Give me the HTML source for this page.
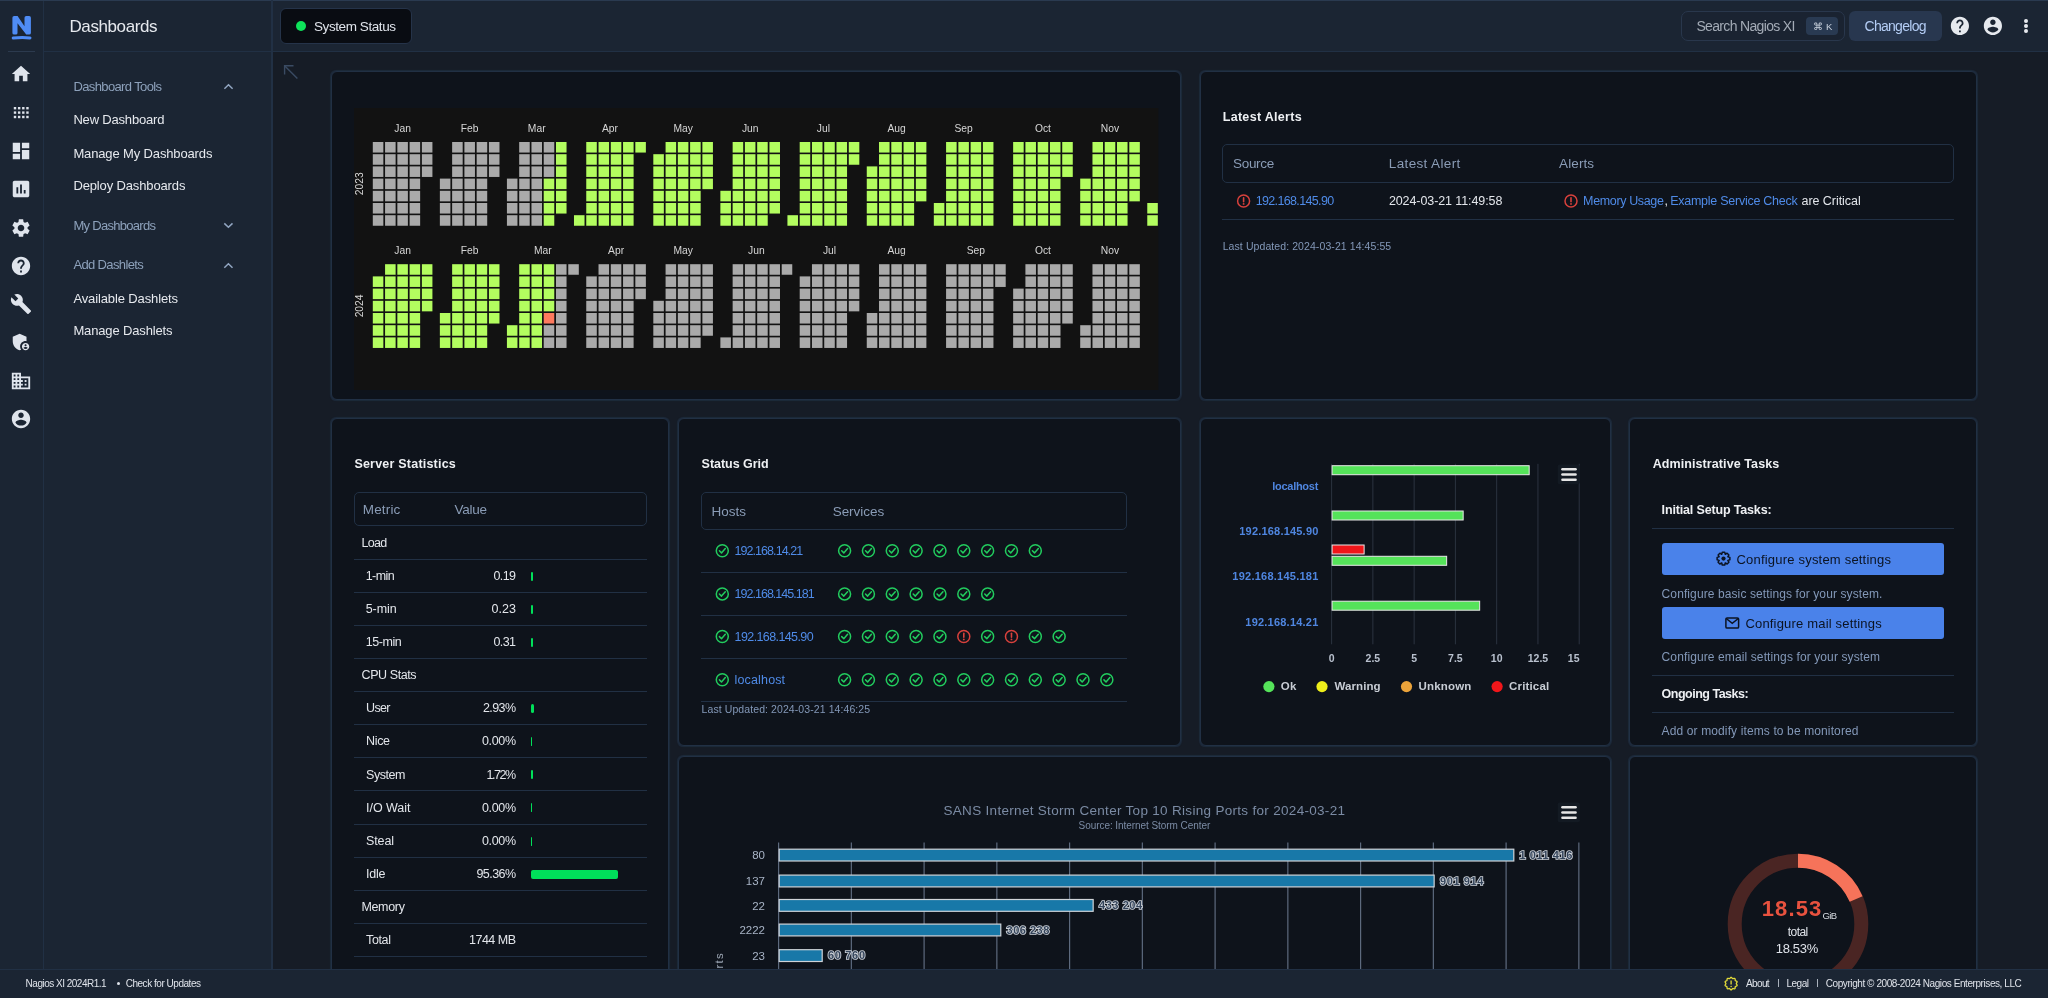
<!DOCTYPE html>
<html><head><meta charset="utf-8">
<style>
html,body{margin:0;padding:0;width:2048px;height:998px;overflow:hidden;background:#161c26;font-family:"Liberation Sans", sans-serif;}
.b{position:absolute;}
.t{position:absolute;white-space:nowrap;line-height:normal;}
#root{position:absolute;left:0;top:0;width:2048px;height:998px;will-change:transform;}
svg{position:absolute;overflow:visible}
</style></head><body><div id="root">
<div class="b" style="left:0px;top:0px;width:2048px;height:998px;background:#161c26"></div>
<div class="b" style="left:0px;top:0px;width:2048px;height:52px;background:#1b2533;border-bottom:1px solid #213044;box-sizing:border-box"></div>
<div class="b" style="left:0px;top:0px;width:44px;height:969px;background:#1b2533;border-right:1px solid #213044;box-sizing:border-box"></div>
<div class="b" style="left:44px;top:0px;width:228px;height:969px;background:#1b2533;border-right:1px solid #213044;box-sizing:border-box"></div>
<div class="b" style="left:44px;top:51px;width:228px;height:1px;background:#213044"></div>
<div class="b" style="left:8px;top:51px;width:27px;height:1px;background:#2c3a4e"></div>
<div class="b" style="left:0px;top:0px;width:2048px;height:1px;background:#2a3a50"></div>
<div class="b" style="left:271px;top:0px;width:2px;height:969px;background:#213044"></div>
<div class="t" style="left:69.50px;top:16.62px;font-size:17px;color:#e6e9ee;letter-spacing:-0.407px;">Dashboards</div>
<div class="b" style="left:280px;top:8px;width:132px;height:36px;background:#090c12;border:1px solid #253349;border-radius:6px;box-sizing:border-box"></div>
<div class="b" style="left:295.8px;top:21px;width:10.2px;height:10.2px;background:#0ee35a;border-radius:50%"></div>
<div class="t" style="left:314.00px;top:18.78px;font-size:13.5px;color:#dfe3ea;letter-spacing:-0.419px;">System Status</div>
<div class="b" style="left:1681px;top:11px;width:164px;height:30px;background:#1a2331;border:1px solid #29374c;border-radius:7px;box-sizing:border-box"></div>
<div class="t" style="left:1696.40px;top:18.33px;font-size:14px;color:#a3abb6;letter-spacing:-0.663px;">Search Nagios XI</div>
<div class="b" style="left:1806px;top:17px;width:32px;height:18px;background:#293a52;border-radius:4px"></div>
<div class="t" style="left:1813.00px;top:20.95px;font-size:10px;color:#c9d2de;">⌘</div>
<div class="t" style="left:1826.00px;top:21.40px;font-size:9.5px;color:#c9d2de;">K</div>
<div class="b" style="left:1849px;top:11px;width:93px;height:30px;background:#28374f;border-radius:6px"></div>
<div class="t" style="left:1864.50px;top:18.33px;font-size:14px;color:#b4cdf5;letter-spacing:-0.715px;">Changelog</div>
<svg style="left:1949.20px;top:15.00px" width="21.8" height="21.8" viewBox="0 0 24 24" fill="#e6e9ee"><path d="M12 2C6.48 2 2 6.48 2 12s4.48 10 10 10 10-4.48 10-10S17.52 2 12 2zm1 17h-2v-2h2v2zm2.07-7.75l-.9.92C13.45 12.9 13 13.5 13 15h-2v-.5c0-1.1.45-2.1 1.17-2.83l1.24-1.26c.37-.36.59-.86.59-1.41 0-1.1-.9-2-2-2s-2 .9-2 2H8c0-2.21 1.79-4 4-4s4 1.79 4 4c0 .88-.36 1.68-.93 2.25z"/></svg>
<svg style="left:1982.10px;top:15.00px" width="21.8" height="21.8" viewBox="0 0 24 24" fill="#e6e9ee"><path d="M12 2C6.48 2 2 6.48 2 12s4.48 10 10 10 10-4.48 10-10S17.52 2 12 2zm0 3c1.66 0 3 1.34 3 3s-1.34 3-3 3-3-1.34-3-3 1.34-3 3-3zm0 14.2c-2.5 0-4.71-1.28-6-3.22.03-1.99 4-3.08 6-3.08 1.99 0 5.97 1.09 6 3.08-1.29 1.94-3.5 3.22-6 3.22z"/></svg>
<div class="b" style="left:2024.05px;top:18.75px;width:3.8px;height:3.8px;background:#e6e9ee;border-radius:50%"></div>
<div class="b" style="left:2024.05px;top:24.1px;width:3.8px;height:3.8px;background:#e6e9ee;border-radius:50%"></div>
<div class="b" style="left:2024.05px;top:29.450000000000003px;width:3.8px;height:3.8px;background:#e6e9ee;border-radius:50%"></div>
<div class="b" style="left:331px;top:71px;width:850px;height:329px;background:#0e131b;border:1px solid #213044;border-radius:6px;box-sizing:border-box;box-shadow:0 0 0.8px 0.4px #1d2a3b"></div>
<div class="b" style="left:1200px;top:71px;width:777px;height:329px;background:#0e131b;border:1px solid #213044;border-radius:6px;box-sizing:border-box;box-shadow:0 0 0.8px 0.4px #1d2a3b"></div>
<div class="b" style="left:331px;top:418px;width:338px;height:600px;background:#0e131b;border:1px solid #213044;border-radius:6px;box-sizing:border-box;box-shadow:0 0 0.8px 0.4px #1d2a3b"></div>
<div class="b" style="left:678px;top:418px;width:503px;height:328px;background:#0e131b;border:1px solid #213044;border-radius:6px;box-sizing:border-box;box-shadow:0 0 0.8px 0.4px #1d2a3b"></div>
<div class="b" style="left:1200px;top:418px;width:411px;height:328px;background:#0e131b;border:1px solid #213044;border-radius:6px;box-sizing:border-box;box-shadow:0 0 0.8px 0.4px #1d2a3b"></div>
<div class="b" style="left:1629px;top:418px;width:348px;height:328px;background:#0e131b;border:1px solid #213044;border-radius:6px;box-sizing:border-box;box-shadow:0 0 0.8px 0.4px #1d2a3b"></div>
<div class="b" style="left:678px;top:756px;width:933px;height:300px;background:#0e131b;border:1px solid #213044;border-radius:6px;box-sizing:border-box;box-shadow:0 0 0.8px 0.4px #1d2a3b"></div>
<div class="b" style="left:1629px;top:756px;width:348px;height:300px;background:#0e131b;border:1px solid #213044;border-radius:6px;box-sizing:border-box;box-shadow:0 0 0.8px 0.4px #1d2a3b"></div>
<svg style="left:0;top:0" width="44" height="52"><path fill="#4f8cf5" d="M12.4 17.8 Q12.4 16.1 14.2 16.1 L17.6 16.1 L24.5 26.2 L24.5 17.8 Q24.5 16.1 26.3 16.1 L29.1 16.1 Q30.9 16.1 30.9 17.8 L30.9 32.9 Q30.9 34.6 29.1 34.6 L26.2 34.6 L17.5 23.2 L17.5 32.9 Q17.5 34.6 15.8 34.6 L14.2 34.6 Q12.4 34.6 12.4 32.9 Z"/><path d="M13.2 38.1 Q21.5 36.9 30.0 37.9" fill="none" stroke="#4f8cf5" stroke-width="3" stroke-linecap="round"/></svg>
<svg style="left:10.30px;top:63.00px" width="22" height="22" viewBox="0 0 24 24" fill="#dfe4ec"><path d="M10 20v-6h4v6h5v-8h3L12 3 2 12h3v8z"/></svg>
<svg style="left:10.30px;top:139.50px" width="22" height="22" viewBox="0 0 24 24" fill="#dfe4ec"><path d="M3 13h8V3H3v10zm0 8h8v-6H3v6zm10 0h8V11h-8v10zm0-18v6h8V3h-8z"/></svg>
<svg style="left:10.30px;top:178.00px" width="22" height="22" viewBox="0 0 24 24" fill="#dfe4ec"><path d="M19 3H5c-1.1 0-2 .9-2 2v14c0 1.1.9 2 2 2h14c1.1 0 2-.9 2-2V5c0-1.1-.9-2-2-2zM9 17H7v-7h2v7zm4 0h-2V7h2v10zm4 0h-2v-4h2v4z"/></svg>
<svg style="left:10.30px;top:216.60px" width="22" height="22" viewBox="0 0 24 24" fill="#dfe4ec"><path d="M19.14 12.94c.04-.3.06-.61.06-.94 0-.32-.02-.64-.07-.94l2.03-1.58c.18-.14.23-.41.12-.61l-1.92-3.32c-.12-.22-.37-.29-.59-.22l-2.39.96c-.5-.38-1.03-.7-1.62-.94l-.36-2.54c-.04-.24-.24-.41-.48-.41h-3.84c-.24 0-.43.17-.47.41l-.36 2.54c-.59.24-1.13.57-1.62.94l-2.39-.96c-.22-.08-.47 0-.59.22L2.74 8.87c-.12.21-.08.47.12.61l2.03 1.58c-.05.3-.09.63-.09.94s.02.64.07.94l-2.03 1.58c-.18.14-.23.41-.12.61l1.92 3.32c.12.22.37.29.59.22l2.39-.96c.5.38 1.03.7 1.62.94l.36 2.54c.05.24.24.41.48.41h3.84c.24 0 .44-.17.47-.41l.36-2.54c.59-.24 1.13-.56 1.62-.94l2.39.96c.22.08.47 0 .59-.22l1.92-3.32c.12-.22.07-.47-.12-.61l-2.01-1.58zM12 15.6c-1.98 0-3.6-1.62-3.6-3.6s1.62-3.6 3.6-3.6 3.6 1.62 3.6 3.6-1.62 3.6-3.6 3.6z"/></svg>
<svg style="left:10.30px;top:255.10px" width="22" height="22" viewBox="0 0 24 24" fill="#dfe4ec"><path d="M12 2C6.48 2 2 6.48 2 12s4.48 10 10 10 10-4.48 10-10S17.52 2 12 2zm1 17h-2v-2h2v2zm2.07-7.75l-.9.92C13.45 12.9 13 13.5 13 15h-2v-.5c0-1.1.45-2.1 1.17-2.83l1.24-1.26c.37-.36.59-.86.59-1.41 0-1.1-.9-2-2-2s-2 .9-2 2H8c0-2.21 1.79-4 4-4s4 1.79 4 4c0 .88-.36 1.68-.93 2.25z"/></svg>
<svg style="left:10.30px;top:292.50px" width="22" height="22" viewBox="0 0 24 24" fill="#dfe4ec"><path d="M22.7 19l-9.1-9.1c.9-2.3.4-5-1.5-6.9-2-2-5-2.4-7.4-1.3L9 6 6 9 1.6 4.7C.4 7.1.9 10.1 2.9 12.1c1.9 1.9 4.6 2.4 6.9 1.5l9.1 9.1c.4.4 1 .4 1.4 0l2.3-2.3c.5-.4.5-1.1.1-1.4z"/></svg>
<svg style="left:10.30px;top:331.00px" width="22" height="22" viewBox="0 0 24 24" fill="#dfe4ec"><path d="M17 11c.34 0 .67.04 1 .09V6.27L10.5 3 3 6.27v4.91c0 4.54 3.2 8.79 7.5 9.82.55-.13 1.08-.32 1.6-.55-.69-.98-1.1-2.17-1.1-3.45 0-3.31 2.69-6 6-6z"/><path d="M17 13c-2.21 0-4 1.79-4 4s1.79 4 4 4 4-1.79 4-4-1.79-4-4-4zm0 1.38c.62 0 1.12.51 1.12 1.12s-.51 1.12-1.12 1.12-1.12-.51-1.12-1.12.5-1.12 1.12-1.12zm0 5.37c-.93 0-1.74-.46-2.24-1.17.05-.72 1.51-1.08 2.24-1.08s2.19.36 2.24 1.08c-.5.71-1.31 1.17-2.24 1.17z"/></svg>
<svg style="left:10.30px;top:370.30px" width="22" height="22" viewBox="0 0 24 24" fill="#dfe4ec"><path d="M12 7V3H2v18h20V7H12zM6 19H4v-2h2v2zm0-4H4v-2h2v2zm0-4H4V9h2v2zm0-4H4V5h2v2zm4 12H8v-2h2v2zm0-4H8v-2h2v2zm0-4H8V9h2v2zm0-4H8V5h2v2zm10 12h-8v-2h2v-2h-2v-2h2v-2h-2V9h8v10zm-2-8h-2v2h2v-2zm0 4h-2v2h2v-2z"/></svg>
<svg style="left:10.30px;top:408.30px" width="22" height="22" viewBox="0 0 24 24" fill="#dfe4ec"><path d="M12 2C6.48 2 2 6.48 2 12s4.48 10 10 10 10-4.48 10-10S17.52 2 12 2zm0 3c1.66 0 3 1.34 3 3s-1.34 3-3 3-3-1.34-3-3 1.34-3 3-3zm0 14.2c-2.5 0-4.71-1.28-6-3.22.03-1.99 4-3.08 6-3.08 1.99 0 5.97 1.09 6 3.08-1.29 1.94-3.5 3.22-6 3.22z"/></svg>
<svg style="left:0;top:0" width="44" height="130"><rect x="13.80" y="107.00" width="2.4" height="2.4" fill="#dfe4ec"/><rect x="17.95" y="107.00" width="2.4" height="2.4" fill="#dfe4ec"/><rect x="22.10" y="107.00" width="2.4" height="2.4" fill="#dfe4ec"/><rect x="26.25" y="107.00" width="2.4" height="2.4" fill="#dfe4ec"/><rect x="13.80" y="111.40" width="2.4" height="2.4" fill="#dfe4ec"/><rect x="17.95" y="111.40" width="2.4" height="2.4" fill="#dfe4ec"/><rect x="22.10" y="111.40" width="2.4" height="2.4" fill="#dfe4ec"/><rect x="26.25" y="111.40" width="2.4" height="2.4" fill="#dfe4ec"/><rect x="13.80" y="115.80" width="2.4" height="2.4" fill="#dfe4ec"/><rect x="17.95" y="115.80" width="2.4" height="2.4" fill="#dfe4ec"/><rect x="22.10" y="115.80" width="2.4" height="2.4" fill="#dfe4ec"/><rect x="26.25" y="115.80" width="2.4" height="2.4" fill="#dfe4ec"/></svg>
<div class="t" style="left:73.40px;top:79.23px;font-size:13px;color:#8da1bb;letter-spacing:-0.616px;">Dashboard Tools</div>
<svg style="left:0;top:0" width="1" height="1"><path d="M224.4 88.7 L228.5 84.8 L232.6 88.7" fill="none" stroke="#92a6c2" stroke-width="1.5"/></svg>
<div class="t" style="left:73.40px;top:112.23px;font-size:13px;color:#e6e9ee;letter-spacing:-0.184px;">New Dashboard</div>
<div class="t" style="left:73.40px;top:145.63px;font-size:13px;color:#e6e9ee;letter-spacing:-0.138px;">Manage My Dashboards</div>
<div class="t" style="left:73.40px;top:178.24px;font-size:13px;color:#e6e9ee;letter-spacing:-0.136px;">Deploy Dashboards</div>
<div class="t" style="left:73.40px;top:217.74px;font-size:13px;color:#8da1bb;letter-spacing:-0.703px;">My Dashboards</div>
<svg style="left:0;top:0" width="1" height="1"><path d="M224.3 223.4 L228.4 227.3 L232.5 223.4" fill="none" stroke="#92a6c2" stroke-width="1.5"/></svg>
<div class="t" style="left:73.40px;top:257.24px;font-size:13px;color:#8da1bb;letter-spacing:-0.638px;">Add Dashlets</div>
<svg style="left:0;top:0" width="1" height="1"><path d="M224.3 267.7 L228.4 263.8 L232.5 267.7" fill="none" stroke="#92a6c2" stroke-width="1.5"/></svg>
<div class="t" style="left:73.40px;top:290.63px;font-size:13px;color:#e6e9ee;letter-spacing:-0.118px;">Available Dashlets</div>
<div class="t" style="left:73.40px;top:323.24px;font-size:13px;color:#e6e9ee;letter-spacing:-0.141px;">Manage Dashlets</div>
<svg style="left:0;top:0" width="1" height="1"><g fill="none" stroke="#3a4b63" stroke-width="1.4"><path d="M284.6 74.5 L284.6 65.8 L293.5 65.8"/><path d="M284.8 66 L297.4 78.4"/></g></svg>
<svg style="left:0;top:0" width="2048" height="998"><defs><clipPath id="hmclip"><rect x="354" y="108" width="804.4" height="282"/></clipPath></defs><rect x="354" y="108" width="804.4" height="282" fill="#121212"/><g clip-path="url(#hmclip)"><rect x="372.80" y="142.00" width="10.55" height="10.55" fill="#aaaaaa"/><rect x="372.80" y="154.20" width="10.55" height="10.55" fill="#aaaaaa"/><rect x="372.80" y="166.40" width="10.55" height="10.55" fill="#aaaaaa"/><rect x="372.80" y="178.60" width="10.55" height="10.55" fill="#aaaaaa"/><rect x="372.80" y="190.80" width="10.55" height="10.55" fill="#aaaaaa"/><rect x="372.80" y="203.00" width="10.55" height="10.55" fill="#aaaaaa"/><rect x="372.80" y="215.20" width="10.55" height="10.55" fill="#aaaaaa"/><rect x="385.07" y="142.00" width="10.55" height="10.55" fill="#aaaaaa"/><rect x="385.07" y="154.20" width="10.55" height="10.55" fill="#aaaaaa"/><rect x="385.07" y="166.40" width="10.55" height="10.55" fill="#aaaaaa"/><rect x="385.07" y="178.60" width="10.55" height="10.55" fill="#aaaaaa"/><rect x="385.07" y="190.80" width="10.55" height="10.55" fill="#aaaaaa"/><rect x="385.07" y="203.00" width="10.55" height="10.55" fill="#aaaaaa"/><rect x="385.07" y="215.20" width="10.55" height="10.55" fill="#aaaaaa"/><rect x="397.34" y="142.00" width="10.55" height="10.55" fill="#aaaaaa"/><rect x="397.34" y="154.20" width="10.55" height="10.55" fill="#aaaaaa"/><rect x="397.34" y="166.40" width="10.55" height="10.55" fill="#aaaaaa"/><rect x="397.34" y="178.60" width="10.55" height="10.55" fill="#aaaaaa"/><rect x="397.34" y="190.80" width="10.55" height="10.55" fill="#aaaaaa"/><rect x="397.34" y="203.00" width="10.55" height="10.55" fill="#aaaaaa"/><rect x="397.34" y="215.20" width="10.55" height="10.55" fill="#aaaaaa"/><rect x="409.60" y="142.00" width="10.55" height="10.55" fill="#aaaaaa"/><rect x="409.60" y="154.20" width="10.55" height="10.55" fill="#aaaaaa"/><rect x="409.60" y="166.40" width="10.55" height="10.55" fill="#aaaaaa"/><rect x="409.60" y="178.60" width="10.55" height="10.55" fill="#aaaaaa"/><rect x="409.60" y="190.80" width="10.55" height="10.55" fill="#aaaaaa"/><rect x="409.60" y="203.00" width="10.55" height="10.55" fill="#aaaaaa"/><rect x="409.60" y="215.20" width="10.55" height="10.55" fill="#aaaaaa"/><rect x="421.87" y="142.00" width="10.55" height="10.55" fill="#aaaaaa"/><rect x="421.87" y="154.20" width="10.55" height="10.55" fill="#aaaaaa"/><rect x="421.87" y="166.40" width="10.55" height="10.55" fill="#aaaaaa"/><text x="402.61" y="131.70" text-anchor="middle" font-size="10.3" fill="#d6d6d6">Jan</text><rect x="439.86" y="178.60" width="10.55" height="10.55" fill="#aaaaaa"/><rect x="439.86" y="190.80" width="10.55" height="10.55" fill="#aaaaaa"/><rect x="439.86" y="203.00" width="10.55" height="10.55" fill="#aaaaaa"/><rect x="439.86" y="215.20" width="10.55" height="10.55" fill="#aaaaaa"/><rect x="452.13" y="142.00" width="10.55" height="10.55" fill="#aaaaaa"/><rect x="452.13" y="154.20" width="10.55" height="10.55" fill="#aaaaaa"/><rect x="452.13" y="166.40" width="10.55" height="10.55" fill="#aaaaaa"/><rect x="452.13" y="178.60" width="10.55" height="10.55" fill="#aaaaaa"/><rect x="452.13" y="190.80" width="10.55" height="10.55" fill="#aaaaaa"/><rect x="452.13" y="203.00" width="10.55" height="10.55" fill="#aaaaaa"/><rect x="452.13" y="215.20" width="10.55" height="10.55" fill="#aaaaaa"/><rect x="464.40" y="142.00" width="10.55" height="10.55" fill="#aaaaaa"/><rect x="464.40" y="154.20" width="10.55" height="10.55" fill="#aaaaaa"/><rect x="464.40" y="166.40" width="10.55" height="10.55" fill="#aaaaaa"/><rect x="464.40" y="178.60" width="10.55" height="10.55" fill="#aaaaaa"/><rect x="464.40" y="190.80" width="10.55" height="10.55" fill="#aaaaaa"/><rect x="464.40" y="203.00" width="10.55" height="10.55" fill="#aaaaaa"/><rect x="464.40" y="215.20" width="10.55" height="10.55" fill="#aaaaaa"/><rect x="476.66" y="142.00" width="10.55" height="10.55" fill="#aaaaaa"/><rect x="476.66" y="154.20" width="10.55" height="10.55" fill="#aaaaaa"/><rect x="476.66" y="166.40" width="10.55" height="10.55" fill="#aaaaaa"/><rect x="476.66" y="178.60" width="10.55" height="10.55" fill="#aaaaaa"/><rect x="476.66" y="190.80" width="10.55" height="10.55" fill="#aaaaaa"/><rect x="476.66" y="203.00" width="10.55" height="10.55" fill="#aaaaaa"/><rect x="476.66" y="215.20" width="10.55" height="10.55" fill="#aaaaaa"/><rect x="488.93" y="142.00" width="10.55" height="10.55" fill="#aaaaaa"/><rect x="488.93" y="154.20" width="10.55" height="10.55" fill="#aaaaaa"/><rect x="488.93" y="166.40" width="10.55" height="10.55" fill="#aaaaaa"/><text x="469.67" y="131.70" text-anchor="middle" font-size="10.3" fill="#d6d6d6">Feb</text><rect x="506.92" y="178.60" width="10.55" height="10.55" fill="#aaaaaa"/><rect x="506.92" y="190.80" width="10.55" height="10.55" fill="#aaaaaa"/><rect x="506.92" y="203.00" width="10.55" height="10.55" fill="#aaaaaa"/><rect x="506.92" y="215.20" width="10.55" height="10.55" fill="#aaaaaa"/><rect x="519.19" y="142.00" width="10.55" height="10.55" fill="#aaaaaa"/><rect x="519.19" y="154.20" width="10.55" height="10.55" fill="#aaaaaa"/><rect x="519.19" y="166.40" width="10.55" height="10.55" fill="#aaaaaa"/><rect x="519.19" y="178.60" width="10.55" height="10.55" fill="#aaaaaa"/><rect x="519.19" y="190.80" width="10.55" height="10.55" fill="#aaaaaa"/><rect x="519.19" y="203.00" width="10.55" height="10.55" fill="#aaaaaa"/><rect x="519.19" y="215.20" width="10.55" height="10.55" fill="#aaaaaa"/><rect x="531.46" y="142.00" width="10.55" height="10.55" fill="#aaaaaa"/><rect x="531.46" y="154.20" width="10.55" height="10.55" fill="#aaaaaa"/><rect x="531.46" y="166.40" width="10.55" height="10.55" fill="#aaaaaa"/><rect x="531.46" y="178.60" width="10.55" height="10.55" fill="#aaaaaa"/><rect x="531.46" y="190.80" width="10.55" height="10.55" fill="#aaaaaa"/><rect x="531.46" y="203.00" width="10.55" height="10.55" fill="#aaaaaa"/><rect x="531.46" y="215.20" width="10.55" height="10.55" fill="#aaaaaa"/><rect x="543.72" y="142.00" width="10.55" height="10.55" fill="#aaaaaa"/><rect x="543.72" y="154.20" width="10.55" height="10.55" fill="#aaaaaa"/><rect x="543.72" y="166.40" width="10.55" height="10.55" fill="#aaaaaa"/><rect x="543.72" y="178.60" width="10.55" height="10.55" fill="#b3fd5f"/><rect x="543.72" y="190.80" width="10.55" height="10.55" fill="#b3fd5f"/><rect x="543.72" y="203.00" width="10.55" height="10.55" fill="#b3fd5f"/><rect x="543.72" y="215.20" width="10.55" height="10.55" fill="#b3fd5f"/><rect x="555.99" y="142.00" width="10.55" height="10.55" fill="#b3fd5f"/><rect x="555.99" y="154.20" width="10.55" height="10.55" fill="#b3fd5f"/><rect x="555.99" y="166.40" width="10.55" height="10.55" fill="#b3fd5f"/><rect x="555.99" y="178.60" width="10.55" height="10.55" fill="#b3fd5f"/><rect x="555.99" y="190.80" width="10.55" height="10.55" fill="#b3fd5f"/><rect x="555.99" y="203.00" width="10.55" height="10.55" fill="#b3fd5f"/><text x="536.73" y="131.70" text-anchor="middle" font-size="10.3" fill="#d6d6d6">Mar</text><rect x="573.98" y="215.20" width="10.55" height="10.55" fill="#b3fd5f"/><rect x="586.25" y="142.00" width="10.55" height="10.55" fill="#b3fd5f"/><rect x="586.25" y="154.20" width="10.55" height="10.55" fill="#b3fd5f"/><rect x="586.25" y="166.40" width="10.55" height="10.55" fill="#b3fd5f"/><rect x="586.25" y="178.60" width="10.55" height="10.55" fill="#b3fd5f"/><rect x="586.25" y="190.80" width="10.55" height="10.55" fill="#b3fd5f"/><rect x="586.25" y="203.00" width="10.55" height="10.55" fill="#b3fd5f"/><rect x="586.25" y="215.20" width="10.55" height="10.55" fill="#b3fd5f"/><rect x="598.52" y="142.00" width="10.55" height="10.55" fill="#b3fd5f"/><rect x="598.52" y="154.20" width="10.55" height="10.55" fill="#b3fd5f"/><rect x="598.52" y="166.40" width="10.55" height="10.55" fill="#b3fd5f"/><rect x="598.52" y="178.60" width="10.55" height="10.55" fill="#b3fd5f"/><rect x="598.52" y="190.80" width="10.55" height="10.55" fill="#b3fd5f"/><rect x="598.52" y="203.00" width="10.55" height="10.55" fill="#b3fd5f"/><rect x="598.52" y="215.20" width="10.55" height="10.55" fill="#b3fd5f"/><rect x="610.78" y="142.00" width="10.55" height="10.55" fill="#b3fd5f"/><rect x="610.78" y="154.20" width="10.55" height="10.55" fill="#b3fd5f"/><rect x="610.78" y="166.40" width="10.55" height="10.55" fill="#b3fd5f"/><rect x="610.78" y="178.60" width="10.55" height="10.55" fill="#b3fd5f"/><rect x="610.78" y="190.80" width="10.55" height="10.55" fill="#b3fd5f"/><rect x="610.78" y="203.00" width="10.55" height="10.55" fill="#b3fd5f"/><rect x="610.78" y="215.20" width="10.55" height="10.55" fill="#b3fd5f"/><rect x="623.05" y="142.00" width="10.55" height="10.55" fill="#b3fd5f"/><rect x="623.05" y="154.20" width="10.55" height="10.55" fill="#b3fd5f"/><rect x="623.05" y="166.40" width="10.55" height="10.55" fill="#b3fd5f"/><rect x="623.05" y="178.60" width="10.55" height="10.55" fill="#b3fd5f"/><rect x="623.05" y="190.80" width="10.55" height="10.55" fill="#b3fd5f"/><rect x="623.05" y="203.00" width="10.55" height="10.55" fill="#b3fd5f"/><rect x="623.05" y="215.20" width="10.55" height="10.55" fill="#b3fd5f"/><rect x="635.32" y="142.00" width="10.55" height="10.55" fill="#b3fd5f"/><text x="609.93" y="131.70" text-anchor="middle" font-size="10.3" fill="#d6d6d6">Apr</text><rect x="653.31" y="154.20" width="10.55" height="10.55" fill="#b3fd5f"/><rect x="653.31" y="166.40" width="10.55" height="10.55" fill="#b3fd5f"/><rect x="653.31" y="178.60" width="10.55" height="10.55" fill="#b3fd5f"/><rect x="653.31" y="190.80" width="10.55" height="10.55" fill="#b3fd5f"/><rect x="653.31" y="203.00" width="10.55" height="10.55" fill="#b3fd5f"/><rect x="653.31" y="215.20" width="10.55" height="10.55" fill="#b3fd5f"/><rect x="665.58" y="142.00" width="10.55" height="10.55" fill="#b3fd5f"/><rect x="665.58" y="154.20" width="10.55" height="10.55" fill="#b3fd5f"/><rect x="665.58" y="166.40" width="10.55" height="10.55" fill="#b3fd5f"/><rect x="665.58" y="178.60" width="10.55" height="10.55" fill="#b3fd5f"/><rect x="665.58" y="190.80" width="10.55" height="10.55" fill="#b3fd5f"/><rect x="665.58" y="203.00" width="10.55" height="10.55" fill="#b3fd5f"/><rect x="665.58" y="215.20" width="10.55" height="10.55" fill="#b3fd5f"/><rect x="677.84" y="142.00" width="10.55" height="10.55" fill="#b3fd5f"/><rect x="677.84" y="154.20" width="10.55" height="10.55" fill="#b3fd5f"/><rect x="677.84" y="166.40" width="10.55" height="10.55" fill="#b3fd5f"/><rect x="677.84" y="178.60" width="10.55" height="10.55" fill="#b3fd5f"/><rect x="677.84" y="190.80" width="10.55" height="10.55" fill="#b3fd5f"/><rect x="677.84" y="203.00" width="10.55" height="10.55" fill="#b3fd5f"/><rect x="677.84" y="215.20" width="10.55" height="10.55" fill="#b3fd5f"/><rect x="690.11" y="142.00" width="10.55" height="10.55" fill="#b3fd5f"/><rect x="690.11" y="154.20" width="10.55" height="10.55" fill="#b3fd5f"/><rect x="690.11" y="166.40" width="10.55" height="10.55" fill="#b3fd5f"/><rect x="690.11" y="178.60" width="10.55" height="10.55" fill="#b3fd5f"/><rect x="690.11" y="190.80" width="10.55" height="10.55" fill="#b3fd5f"/><rect x="690.11" y="203.00" width="10.55" height="10.55" fill="#b3fd5f"/><rect x="690.11" y="215.20" width="10.55" height="10.55" fill="#b3fd5f"/><rect x="702.38" y="142.00" width="10.55" height="10.55" fill="#b3fd5f"/><rect x="702.38" y="154.20" width="10.55" height="10.55" fill="#b3fd5f"/><rect x="702.38" y="166.40" width="10.55" height="10.55" fill="#b3fd5f"/><rect x="702.38" y="178.60" width="10.55" height="10.55" fill="#b3fd5f"/><text x="683.12" y="131.70" text-anchor="middle" font-size="10.3" fill="#d6d6d6">May</text><rect x="720.37" y="190.80" width="10.55" height="10.55" fill="#b3fd5f"/><rect x="720.37" y="203.00" width="10.55" height="10.55" fill="#b3fd5f"/><rect x="720.37" y="215.20" width="10.55" height="10.55" fill="#b3fd5f"/><rect x="732.64" y="142.00" width="10.55" height="10.55" fill="#b3fd5f"/><rect x="732.64" y="154.20" width="10.55" height="10.55" fill="#b3fd5f"/><rect x="732.64" y="166.40" width="10.55" height="10.55" fill="#b3fd5f"/><rect x="732.64" y="178.60" width="10.55" height="10.55" fill="#b3fd5f"/><rect x="732.64" y="190.80" width="10.55" height="10.55" fill="#b3fd5f"/><rect x="732.64" y="203.00" width="10.55" height="10.55" fill="#b3fd5f"/><rect x="732.64" y="215.20" width="10.55" height="10.55" fill="#b3fd5f"/><rect x="744.90" y="142.00" width="10.55" height="10.55" fill="#b3fd5f"/><rect x="744.90" y="154.20" width="10.55" height="10.55" fill="#b3fd5f"/><rect x="744.90" y="166.40" width="10.55" height="10.55" fill="#b3fd5f"/><rect x="744.90" y="178.60" width="10.55" height="10.55" fill="#b3fd5f"/><rect x="744.90" y="190.80" width="10.55" height="10.55" fill="#b3fd5f"/><rect x="744.90" y="203.00" width="10.55" height="10.55" fill="#b3fd5f"/><rect x="744.90" y="215.20" width="10.55" height="10.55" fill="#b3fd5f"/><rect x="757.17" y="142.00" width="10.55" height="10.55" fill="#b3fd5f"/><rect x="757.17" y="154.20" width="10.55" height="10.55" fill="#b3fd5f"/><rect x="757.17" y="166.40" width="10.55" height="10.55" fill="#b3fd5f"/><rect x="757.17" y="178.60" width="10.55" height="10.55" fill="#b3fd5f"/><rect x="757.17" y="190.80" width="10.55" height="10.55" fill="#b3fd5f"/><rect x="757.17" y="203.00" width="10.55" height="10.55" fill="#b3fd5f"/><rect x="757.17" y="215.20" width="10.55" height="10.55" fill="#b3fd5f"/><rect x="769.44" y="142.00" width="10.55" height="10.55" fill="#b3fd5f"/><rect x="769.44" y="154.20" width="10.55" height="10.55" fill="#b3fd5f"/><rect x="769.44" y="166.40" width="10.55" height="10.55" fill="#b3fd5f"/><rect x="769.44" y="178.60" width="10.55" height="10.55" fill="#b3fd5f"/><rect x="769.44" y="190.80" width="10.55" height="10.55" fill="#b3fd5f"/><rect x="769.44" y="203.00" width="10.55" height="10.55" fill="#b3fd5f"/><text x="750.18" y="131.70" text-anchor="middle" font-size="10.3" fill="#d6d6d6">Jun</text><rect x="787.43" y="215.20" width="10.55" height="10.55" fill="#b3fd5f"/><rect x="799.70" y="142.00" width="10.55" height="10.55" fill="#b3fd5f"/><rect x="799.70" y="154.20" width="10.55" height="10.55" fill="#b3fd5f"/><rect x="799.70" y="166.40" width="10.55" height="10.55" fill="#b3fd5f"/><rect x="799.70" y="178.60" width="10.55" height="10.55" fill="#b3fd5f"/><rect x="799.70" y="190.80" width="10.55" height="10.55" fill="#b3fd5f"/><rect x="799.70" y="203.00" width="10.55" height="10.55" fill="#b3fd5f"/><rect x="799.70" y="215.20" width="10.55" height="10.55" fill="#b3fd5f"/><rect x="811.96" y="142.00" width="10.55" height="10.55" fill="#b3fd5f"/><rect x="811.96" y="154.20" width="10.55" height="10.55" fill="#b3fd5f"/><rect x="811.96" y="166.40" width="10.55" height="10.55" fill="#b3fd5f"/><rect x="811.96" y="178.60" width="10.55" height="10.55" fill="#b3fd5f"/><rect x="811.96" y="190.80" width="10.55" height="10.55" fill="#b3fd5f"/><rect x="811.96" y="203.00" width="10.55" height="10.55" fill="#b3fd5f"/><rect x="811.96" y="215.20" width="10.55" height="10.55" fill="#b3fd5f"/><rect x="824.23" y="142.00" width="10.55" height="10.55" fill="#b3fd5f"/><rect x="824.23" y="154.20" width="10.55" height="10.55" fill="#b3fd5f"/><rect x="824.23" y="166.40" width="10.55" height="10.55" fill="#b3fd5f"/><rect x="824.23" y="178.60" width="10.55" height="10.55" fill="#b3fd5f"/><rect x="824.23" y="190.80" width="10.55" height="10.55" fill="#b3fd5f"/><rect x="824.23" y="203.00" width="10.55" height="10.55" fill="#b3fd5f"/><rect x="824.23" y="215.20" width="10.55" height="10.55" fill="#b3fd5f"/><rect x="836.50" y="142.00" width="10.55" height="10.55" fill="#b3fd5f"/><rect x="836.50" y="154.20" width="10.55" height="10.55" fill="#b3fd5f"/><rect x="836.50" y="166.40" width="10.55" height="10.55" fill="#b3fd5f"/><rect x="836.50" y="178.60" width="10.55" height="10.55" fill="#b3fd5f"/><rect x="836.50" y="190.80" width="10.55" height="10.55" fill="#b3fd5f"/><rect x="836.50" y="203.00" width="10.55" height="10.55" fill="#b3fd5f"/><rect x="836.50" y="215.20" width="10.55" height="10.55" fill="#b3fd5f"/><rect x="848.77" y="142.00" width="10.55" height="10.55" fill="#b3fd5f"/><rect x="848.77" y="154.20" width="10.55" height="10.55" fill="#b3fd5f"/><text x="823.37" y="131.70" text-anchor="middle" font-size="10.3" fill="#d6d6d6">Jul</text><rect x="866.76" y="166.40" width="10.55" height="10.55" fill="#b3fd5f"/><rect x="866.76" y="178.60" width="10.55" height="10.55" fill="#b3fd5f"/><rect x="866.76" y="190.80" width="10.55" height="10.55" fill="#b3fd5f"/><rect x="866.76" y="203.00" width="10.55" height="10.55" fill="#b3fd5f"/><rect x="866.76" y="215.20" width="10.55" height="10.55" fill="#b3fd5f"/><rect x="879.02" y="142.00" width="10.55" height="10.55" fill="#b3fd5f"/><rect x="879.02" y="154.20" width="10.55" height="10.55" fill="#b3fd5f"/><rect x="879.02" y="166.40" width="10.55" height="10.55" fill="#b3fd5f"/><rect x="879.02" y="178.60" width="10.55" height="10.55" fill="#b3fd5f"/><rect x="879.02" y="190.80" width="10.55" height="10.55" fill="#b3fd5f"/><rect x="879.02" y="203.00" width="10.55" height="10.55" fill="#b3fd5f"/><rect x="879.02" y="215.20" width="10.55" height="10.55" fill="#b3fd5f"/><rect x="891.29" y="142.00" width="10.55" height="10.55" fill="#b3fd5f"/><rect x="891.29" y="154.20" width="10.55" height="10.55" fill="#b3fd5f"/><rect x="891.29" y="166.40" width="10.55" height="10.55" fill="#b3fd5f"/><rect x="891.29" y="178.60" width="10.55" height="10.55" fill="#b3fd5f"/><rect x="891.29" y="190.80" width="10.55" height="10.55" fill="#b3fd5f"/><rect x="891.29" y="203.00" width="10.55" height="10.55" fill="#b3fd5f"/><rect x="891.29" y="215.20" width="10.55" height="10.55" fill="#b3fd5f"/><rect x="903.56" y="142.00" width="10.55" height="10.55" fill="#b3fd5f"/><rect x="903.56" y="154.20" width="10.55" height="10.55" fill="#b3fd5f"/><rect x="903.56" y="166.40" width="10.55" height="10.55" fill="#b3fd5f"/><rect x="903.56" y="178.60" width="10.55" height="10.55" fill="#b3fd5f"/><rect x="903.56" y="190.80" width="10.55" height="10.55" fill="#b3fd5f"/><rect x="903.56" y="203.00" width="10.55" height="10.55" fill="#b3fd5f"/><rect x="903.56" y="215.20" width="10.55" height="10.55" fill="#b3fd5f"/><rect x="915.83" y="142.00" width="10.55" height="10.55" fill="#b3fd5f"/><rect x="915.83" y="154.20" width="10.55" height="10.55" fill="#b3fd5f"/><rect x="915.83" y="166.40" width="10.55" height="10.55" fill="#b3fd5f"/><rect x="915.83" y="178.60" width="10.55" height="10.55" fill="#b3fd5f"/><rect x="915.83" y="190.80" width="10.55" height="10.55" fill="#b3fd5f"/><text x="896.57" y="131.70" text-anchor="middle" font-size="10.3" fill="#d6d6d6">Aug</text><rect x="933.82" y="203.00" width="10.55" height="10.55" fill="#b3fd5f"/><rect x="933.82" y="215.20" width="10.55" height="10.55" fill="#b3fd5f"/><rect x="946.08" y="142.00" width="10.55" height="10.55" fill="#b3fd5f"/><rect x="946.08" y="154.20" width="10.55" height="10.55" fill="#b3fd5f"/><rect x="946.08" y="166.40" width="10.55" height="10.55" fill="#b3fd5f"/><rect x="946.08" y="178.60" width="10.55" height="10.55" fill="#b3fd5f"/><rect x="946.08" y="190.80" width="10.55" height="10.55" fill="#b3fd5f"/><rect x="946.08" y="203.00" width="10.55" height="10.55" fill="#b3fd5f"/><rect x="946.08" y="215.20" width="10.55" height="10.55" fill="#b3fd5f"/><rect x="958.35" y="142.00" width="10.55" height="10.55" fill="#b3fd5f"/><rect x="958.35" y="154.20" width="10.55" height="10.55" fill="#b3fd5f"/><rect x="958.35" y="166.40" width="10.55" height="10.55" fill="#b3fd5f"/><rect x="958.35" y="178.60" width="10.55" height="10.55" fill="#b3fd5f"/><rect x="958.35" y="190.80" width="10.55" height="10.55" fill="#b3fd5f"/><rect x="958.35" y="203.00" width="10.55" height="10.55" fill="#b3fd5f"/><rect x="958.35" y="215.20" width="10.55" height="10.55" fill="#b3fd5f"/><rect x="970.62" y="142.00" width="10.55" height="10.55" fill="#b3fd5f"/><rect x="970.62" y="154.20" width="10.55" height="10.55" fill="#b3fd5f"/><rect x="970.62" y="166.40" width="10.55" height="10.55" fill="#b3fd5f"/><rect x="970.62" y="178.60" width="10.55" height="10.55" fill="#b3fd5f"/><rect x="970.62" y="190.80" width="10.55" height="10.55" fill="#b3fd5f"/><rect x="970.62" y="203.00" width="10.55" height="10.55" fill="#b3fd5f"/><rect x="970.62" y="215.20" width="10.55" height="10.55" fill="#b3fd5f"/><rect x="982.89" y="142.00" width="10.55" height="10.55" fill="#b3fd5f"/><rect x="982.89" y="154.20" width="10.55" height="10.55" fill="#b3fd5f"/><rect x="982.89" y="166.40" width="10.55" height="10.55" fill="#b3fd5f"/><rect x="982.89" y="178.60" width="10.55" height="10.55" fill="#b3fd5f"/><rect x="982.89" y="190.80" width="10.55" height="10.55" fill="#b3fd5f"/><rect x="982.89" y="203.00" width="10.55" height="10.55" fill="#b3fd5f"/><rect x="982.89" y="215.20" width="10.55" height="10.55" fill="#b3fd5f"/><text x="963.63" y="131.70" text-anchor="middle" font-size="10.3" fill="#d6d6d6">Sep</text><rect x="1013.14" y="142.00" width="10.55" height="10.55" fill="#b3fd5f"/><rect x="1013.14" y="154.20" width="10.55" height="10.55" fill="#b3fd5f"/><rect x="1013.14" y="166.40" width="10.55" height="10.55" fill="#b3fd5f"/><rect x="1013.14" y="178.60" width="10.55" height="10.55" fill="#b3fd5f"/><rect x="1013.14" y="190.80" width="10.55" height="10.55" fill="#b3fd5f"/><rect x="1013.14" y="203.00" width="10.55" height="10.55" fill="#b3fd5f"/><rect x="1013.14" y="215.20" width="10.55" height="10.55" fill="#b3fd5f"/><rect x="1025.41" y="142.00" width="10.55" height="10.55" fill="#b3fd5f"/><rect x="1025.41" y="154.20" width="10.55" height="10.55" fill="#b3fd5f"/><rect x="1025.41" y="166.40" width="10.55" height="10.55" fill="#b3fd5f"/><rect x="1025.41" y="178.60" width="10.55" height="10.55" fill="#b3fd5f"/><rect x="1025.41" y="190.80" width="10.55" height="10.55" fill="#b3fd5f"/><rect x="1025.41" y="203.00" width="10.55" height="10.55" fill="#b3fd5f"/><rect x="1025.41" y="215.20" width="10.55" height="10.55" fill="#b3fd5f"/><rect x="1037.68" y="142.00" width="10.55" height="10.55" fill="#b3fd5f"/><rect x="1037.68" y="154.20" width="10.55" height="10.55" fill="#b3fd5f"/><rect x="1037.68" y="166.40" width="10.55" height="10.55" fill="#b3fd5f"/><rect x="1037.68" y="178.60" width="10.55" height="10.55" fill="#b3fd5f"/><rect x="1037.68" y="190.80" width="10.55" height="10.55" fill="#b3fd5f"/><rect x="1037.68" y="203.00" width="10.55" height="10.55" fill="#b3fd5f"/><rect x="1037.68" y="215.20" width="10.55" height="10.55" fill="#b3fd5f"/><rect x="1049.95" y="142.00" width="10.55" height="10.55" fill="#b3fd5f"/><rect x="1049.95" y="154.20" width="10.55" height="10.55" fill="#b3fd5f"/><rect x="1049.95" y="166.40" width="10.55" height="10.55" fill="#b3fd5f"/><rect x="1049.95" y="178.60" width="10.55" height="10.55" fill="#b3fd5f"/><rect x="1049.95" y="190.80" width="10.55" height="10.55" fill="#b3fd5f"/><rect x="1049.95" y="203.00" width="10.55" height="10.55" fill="#b3fd5f"/><rect x="1049.95" y="215.20" width="10.55" height="10.55" fill="#b3fd5f"/><rect x="1062.22" y="142.00" width="10.55" height="10.55" fill="#b3fd5f"/><rect x="1062.22" y="154.20" width="10.55" height="10.55" fill="#b3fd5f"/><rect x="1062.22" y="166.40" width="10.55" height="10.55" fill="#b3fd5f"/><text x="1042.95" y="131.70" text-anchor="middle" font-size="10.3" fill="#d6d6d6">Oct</text><rect x="1080.20" y="178.60" width="10.55" height="10.55" fill="#b3fd5f"/><rect x="1080.20" y="190.80" width="10.55" height="10.55" fill="#b3fd5f"/><rect x="1080.20" y="203.00" width="10.55" height="10.55" fill="#b3fd5f"/><rect x="1080.20" y="215.20" width="10.55" height="10.55" fill="#b3fd5f"/><rect x="1092.47" y="142.00" width="10.55" height="10.55" fill="#b3fd5f"/><rect x="1092.47" y="154.20" width="10.55" height="10.55" fill="#b3fd5f"/><rect x="1092.47" y="166.40" width="10.55" height="10.55" fill="#b3fd5f"/><rect x="1092.47" y="178.60" width="10.55" height="10.55" fill="#b3fd5f"/><rect x="1092.47" y="190.80" width="10.55" height="10.55" fill="#b3fd5f"/><rect x="1092.47" y="203.00" width="10.55" height="10.55" fill="#b3fd5f"/><rect x="1092.47" y="215.20" width="10.55" height="10.55" fill="#b3fd5f"/><rect x="1104.74" y="142.00" width="10.55" height="10.55" fill="#b3fd5f"/><rect x="1104.74" y="154.20" width="10.55" height="10.55" fill="#b3fd5f"/><rect x="1104.74" y="166.40" width="10.55" height="10.55" fill="#b3fd5f"/><rect x="1104.74" y="178.60" width="10.55" height="10.55" fill="#b3fd5f"/><rect x="1104.74" y="190.80" width="10.55" height="10.55" fill="#b3fd5f"/><rect x="1104.74" y="203.00" width="10.55" height="10.55" fill="#b3fd5f"/><rect x="1104.74" y="215.20" width="10.55" height="10.55" fill="#b3fd5f"/><rect x="1117.01" y="142.00" width="10.55" height="10.55" fill="#b3fd5f"/><rect x="1117.01" y="154.20" width="10.55" height="10.55" fill="#b3fd5f"/><rect x="1117.01" y="166.40" width="10.55" height="10.55" fill="#b3fd5f"/><rect x="1117.01" y="178.60" width="10.55" height="10.55" fill="#b3fd5f"/><rect x="1117.01" y="190.80" width="10.55" height="10.55" fill="#b3fd5f"/><rect x="1117.01" y="203.00" width="10.55" height="10.55" fill="#b3fd5f"/><rect x="1117.01" y="215.20" width="10.55" height="10.55" fill="#b3fd5f"/><rect x="1129.28" y="142.00" width="10.55" height="10.55" fill="#b3fd5f"/><rect x="1129.28" y="154.20" width="10.55" height="10.55" fill="#b3fd5f"/><rect x="1129.28" y="166.40" width="10.55" height="10.55" fill="#b3fd5f"/><rect x="1129.28" y="178.60" width="10.55" height="10.55" fill="#b3fd5f"/><rect x="1129.28" y="190.80" width="10.55" height="10.55" fill="#b3fd5f"/><text x="1110.01" y="131.70" text-anchor="middle" font-size="10.3" fill="#d6d6d6">Nov</text><rect x="1147.26" y="203.00" width="10.55" height="10.55" fill="#b3fd5f"/><rect x="1147.26" y="215.20" width="10.55" height="10.55" fill="#b3fd5f"/><rect x="1159.53" y="142.00" width="10.55" height="10.55" fill="#b3fd5f"/><rect x="1159.53" y="154.20" width="10.55" height="10.55" fill="#b3fd5f"/><rect x="1159.53" y="166.40" width="10.55" height="10.55" fill="#b3fd5f"/><rect x="1159.53" y="178.60" width="10.55" height="10.55" fill="#b3fd5f"/><rect x="1159.53" y="190.80" width="10.55" height="10.55" fill="#b3fd5f"/><rect x="1159.53" y="203.00" width="10.55" height="10.55" fill="#b3fd5f"/><rect x="1159.53" y="215.20" width="10.55" height="10.55" fill="#b3fd5f"/><rect x="1171.80" y="142.00" width="10.55" height="10.55" fill="#b3fd5f"/><rect x="1171.80" y="154.20" width="10.55" height="10.55" fill="#b3fd5f"/><rect x="1171.80" y="166.40" width="10.55" height="10.55" fill="#b3fd5f"/><rect x="1171.80" y="178.60" width="10.55" height="10.55" fill="#b3fd5f"/><rect x="1171.80" y="190.80" width="10.55" height="10.55" fill="#b3fd5f"/><rect x="1171.80" y="203.00" width="10.55" height="10.55" fill="#b3fd5f"/><rect x="1171.80" y="215.20" width="10.55" height="10.55" fill="#b3fd5f"/><rect x="1184.07" y="142.00" width="10.55" height="10.55" fill="#b3fd5f"/><rect x="1184.07" y="154.20" width="10.55" height="10.55" fill="#b3fd5f"/><rect x="1184.07" y="166.40" width="10.55" height="10.55" fill="#b3fd5f"/><rect x="1184.07" y="178.60" width="10.55" height="10.55" fill="#b3fd5f"/><rect x="1184.07" y="190.80" width="10.55" height="10.55" fill="#b3fd5f"/><rect x="1184.07" y="203.00" width="10.55" height="10.55" fill="#b3fd5f"/><rect x="1184.07" y="215.20" width="10.55" height="10.55" fill="#b3fd5f"/><rect x="1196.34" y="142.00" width="10.55" height="10.55" fill="#b3fd5f"/><rect x="1196.34" y="154.20" width="10.55" height="10.55" fill="#b3fd5f"/><rect x="1196.34" y="166.40" width="10.55" height="10.55" fill="#b3fd5f"/><rect x="1196.34" y="178.60" width="10.55" height="10.55" fill="#b3fd5f"/><rect x="1196.34" y="190.80" width="10.55" height="10.55" fill="#b3fd5f"/><rect x="1196.34" y="203.00" width="10.55" height="10.55" fill="#b3fd5f"/><rect x="1196.34" y="215.20" width="10.55" height="10.55" fill="#b3fd5f"/><rect x="1208.60" y="142.00" width="10.55" height="10.55" fill="#b3fd5f"/><text x="1183.21" y="131.70" text-anchor="middle" font-size="10.3" fill="#d6d6d6">Dec</text><text x="0" y="0" transform="translate(363.2 183.70) rotate(-90)" text-anchor="middle" font-size="10.3" fill="#d6d6d6">2023</text><rect x="372.80" y="276.40" width="10.55" height="10.55" fill="#b3fd5f"/><rect x="372.80" y="288.60" width="10.55" height="10.55" fill="#b3fd5f"/><rect x="372.80" y="300.80" width="10.55" height="10.55" fill="#b3fd5f"/><rect x="372.80" y="313.00" width="10.55" height="10.55" fill="#b3fd5f"/><rect x="372.80" y="325.20" width="10.55" height="10.55" fill="#b3fd5f"/><rect x="372.80" y="337.40" width="10.55" height="10.55" fill="#b3fd5f"/><rect x="385.07" y="264.20" width="10.55" height="10.55" fill="#b3fd5f"/><rect x="385.07" y="276.40" width="10.55" height="10.55" fill="#b3fd5f"/><rect x="385.07" y="288.60" width="10.55" height="10.55" fill="#b3fd5f"/><rect x="385.07" y="300.80" width="10.55" height="10.55" fill="#b3fd5f"/><rect x="385.07" y="313.00" width="10.55" height="10.55" fill="#b3fd5f"/><rect x="385.07" y="325.20" width="10.55" height="10.55" fill="#b3fd5f"/><rect x="385.07" y="337.40" width="10.55" height="10.55" fill="#b3fd5f"/><rect x="397.34" y="264.20" width="10.55" height="10.55" fill="#b3fd5f"/><rect x="397.34" y="276.40" width="10.55" height="10.55" fill="#b3fd5f"/><rect x="397.34" y="288.60" width="10.55" height="10.55" fill="#b3fd5f"/><rect x="397.34" y="300.80" width="10.55" height="10.55" fill="#b3fd5f"/><rect x="397.34" y="313.00" width="10.55" height="10.55" fill="#b3fd5f"/><rect x="397.34" y="325.20" width="10.55" height="10.55" fill="#b3fd5f"/><rect x="397.34" y="337.40" width="10.55" height="10.55" fill="#b3fd5f"/><rect x="409.60" y="264.20" width="10.55" height="10.55" fill="#b3fd5f"/><rect x="409.60" y="276.40" width="10.55" height="10.55" fill="#b3fd5f"/><rect x="409.60" y="288.60" width="10.55" height="10.55" fill="#b3fd5f"/><rect x="409.60" y="300.80" width="10.55" height="10.55" fill="#b3fd5f"/><rect x="409.60" y="313.00" width="10.55" height="10.55" fill="#b3fd5f"/><rect x="409.60" y="325.20" width="10.55" height="10.55" fill="#b3fd5f"/><rect x="409.60" y="337.40" width="10.55" height="10.55" fill="#b3fd5f"/><rect x="421.87" y="264.20" width="10.55" height="10.55" fill="#b3fd5f"/><rect x="421.87" y="276.40" width="10.55" height="10.55" fill="#b3fd5f"/><rect x="421.87" y="288.60" width="10.55" height="10.55" fill="#b3fd5f"/><rect x="421.87" y="300.80" width="10.55" height="10.55" fill="#b3fd5f"/><text x="402.61" y="253.90" text-anchor="middle" font-size="10.3" fill="#d6d6d6">Jan</text><rect x="439.86" y="313.00" width="10.55" height="10.55" fill="#b3fd5f"/><rect x="439.86" y="325.20" width="10.55" height="10.55" fill="#b3fd5f"/><rect x="439.86" y="337.40" width="10.55" height="10.55" fill="#b3fd5f"/><rect x="452.13" y="264.20" width="10.55" height="10.55" fill="#b3fd5f"/><rect x="452.13" y="276.40" width="10.55" height="10.55" fill="#b3fd5f"/><rect x="452.13" y="288.60" width="10.55" height="10.55" fill="#b3fd5f"/><rect x="452.13" y="300.80" width="10.55" height="10.55" fill="#b3fd5f"/><rect x="452.13" y="313.00" width="10.55" height="10.55" fill="#b3fd5f"/><rect x="452.13" y="325.20" width="10.55" height="10.55" fill="#b3fd5f"/><rect x="452.13" y="337.40" width="10.55" height="10.55" fill="#b3fd5f"/><rect x="464.40" y="264.20" width="10.55" height="10.55" fill="#b3fd5f"/><rect x="464.40" y="276.40" width="10.55" height="10.55" fill="#b3fd5f"/><rect x="464.40" y="288.60" width="10.55" height="10.55" fill="#b3fd5f"/><rect x="464.40" y="300.80" width="10.55" height="10.55" fill="#b3fd5f"/><rect x="464.40" y="313.00" width="10.55" height="10.55" fill="#b3fd5f"/><rect x="464.40" y="325.20" width="10.55" height="10.55" fill="#b3fd5f"/><rect x="464.40" y="337.40" width="10.55" height="10.55" fill="#b3fd5f"/><rect x="476.66" y="264.20" width="10.55" height="10.55" fill="#b3fd5f"/><rect x="476.66" y="276.40" width="10.55" height="10.55" fill="#b3fd5f"/><rect x="476.66" y="288.60" width="10.55" height="10.55" fill="#b3fd5f"/><rect x="476.66" y="300.80" width="10.55" height="10.55" fill="#b3fd5f"/><rect x="476.66" y="313.00" width="10.55" height="10.55" fill="#b3fd5f"/><rect x="476.66" y="325.20" width="10.55" height="10.55" fill="#b3fd5f"/><rect x="476.66" y="337.40" width="10.55" height="10.55" fill="#b3fd5f"/><rect x="488.93" y="264.20" width="10.55" height="10.55" fill="#b3fd5f"/><rect x="488.93" y="276.40" width="10.55" height="10.55" fill="#b3fd5f"/><rect x="488.93" y="288.60" width="10.55" height="10.55" fill="#b3fd5f"/><rect x="488.93" y="300.80" width="10.55" height="10.55" fill="#b3fd5f"/><rect x="488.93" y="313.00" width="10.55" height="10.55" fill="#b3fd5f"/><text x="469.67" y="253.90" text-anchor="middle" font-size="10.3" fill="#d6d6d6">Feb</text><rect x="506.92" y="325.20" width="10.55" height="10.55" fill="#b3fd5f"/><rect x="506.92" y="337.40" width="10.55" height="10.55" fill="#b3fd5f"/><rect x="519.19" y="264.20" width="10.55" height="10.55" fill="#b3fd5f"/><rect x="519.19" y="276.40" width="10.55" height="10.55" fill="#b3fd5f"/><rect x="519.19" y="288.60" width="10.55" height="10.55" fill="#b3fd5f"/><rect x="519.19" y="300.80" width="10.55" height="10.55" fill="#b3fd5f"/><rect x="519.19" y="313.00" width="10.55" height="10.55" fill="#b3fd5f"/><rect x="519.19" y="325.20" width="10.55" height="10.55" fill="#b3fd5f"/><rect x="519.19" y="337.40" width="10.55" height="10.55" fill="#b3fd5f"/><rect x="531.46" y="264.20" width="10.55" height="10.55" fill="#b3fd5f"/><rect x="531.46" y="276.40" width="10.55" height="10.55" fill="#b3fd5f"/><rect x="531.46" y="288.60" width="10.55" height="10.55" fill="#b3fd5f"/><rect x="531.46" y="300.80" width="10.55" height="10.55" fill="#b3fd5f"/><rect x="531.46" y="313.00" width="10.55" height="10.55" fill="#b3fd5f"/><rect x="531.46" y="325.20" width="10.55" height="10.55" fill="#b3fd5f"/><rect x="531.46" y="337.40" width="10.55" height="10.55" fill="#b3fd5f"/><rect x="543.72" y="264.20" width="10.55" height="10.55" fill="#b3fd5f"/><rect x="543.72" y="276.40" width="10.55" height="10.55" fill="#b3fd5f"/><rect x="543.72" y="288.60" width="10.55" height="10.55" fill="#b3fd5f"/><rect x="543.72" y="300.80" width="10.55" height="10.55" fill="#b3fd5f"/><rect x="543.72" y="313.00" width="10.55" height="10.55" fill="#fe7a5e"/><rect x="543.72" y="325.20" width="10.55" height="10.55" fill="#aaaaaa"/><rect x="543.72" y="337.40" width="10.55" height="10.55" fill="#aaaaaa"/><rect x="555.99" y="264.20" width="10.55" height="10.55" fill="#aaaaaa"/><rect x="555.99" y="276.40" width="10.55" height="10.55" fill="#aaaaaa"/><rect x="555.99" y="288.60" width="10.55" height="10.55" fill="#aaaaaa"/><rect x="555.99" y="300.80" width="10.55" height="10.55" fill="#aaaaaa"/><rect x="555.99" y="313.00" width="10.55" height="10.55" fill="#aaaaaa"/><rect x="555.99" y="325.20" width="10.55" height="10.55" fill="#aaaaaa"/><rect x="555.99" y="337.40" width="10.55" height="10.55" fill="#aaaaaa"/><rect x="568.26" y="264.20" width="10.55" height="10.55" fill="#aaaaaa"/><text x="542.87" y="253.90" text-anchor="middle" font-size="10.3" fill="#d6d6d6">Mar</text><rect x="586.25" y="276.40" width="10.55" height="10.55" fill="#aaaaaa"/><rect x="586.25" y="288.60" width="10.55" height="10.55" fill="#aaaaaa"/><rect x="586.25" y="300.80" width="10.55" height="10.55" fill="#aaaaaa"/><rect x="586.25" y="313.00" width="10.55" height="10.55" fill="#aaaaaa"/><rect x="586.25" y="325.20" width="10.55" height="10.55" fill="#aaaaaa"/><rect x="586.25" y="337.40" width="10.55" height="10.55" fill="#aaaaaa"/><rect x="598.52" y="264.20" width="10.55" height="10.55" fill="#aaaaaa"/><rect x="598.52" y="276.40" width="10.55" height="10.55" fill="#aaaaaa"/><rect x="598.52" y="288.60" width="10.55" height="10.55" fill="#aaaaaa"/><rect x="598.52" y="300.80" width="10.55" height="10.55" fill="#aaaaaa"/><rect x="598.52" y="313.00" width="10.55" height="10.55" fill="#aaaaaa"/><rect x="598.52" y="325.20" width="10.55" height="10.55" fill="#aaaaaa"/><rect x="598.52" y="337.40" width="10.55" height="10.55" fill="#aaaaaa"/><rect x="610.78" y="264.20" width="10.55" height="10.55" fill="#aaaaaa"/><rect x="610.78" y="276.40" width="10.55" height="10.55" fill="#aaaaaa"/><rect x="610.78" y="288.60" width="10.55" height="10.55" fill="#aaaaaa"/><rect x="610.78" y="300.80" width="10.55" height="10.55" fill="#aaaaaa"/><rect x="610.78" y="313.00" width="10.55" height="10.55" fill="#aaaaaa"/><rect x="610.78" y="325.20" width="10.55" height="10.55" fill="#aaaaaa"/><rect x="610.78" y="337.40" width="10.55" height="10.55" fill="#aaaaaa"/><rect x="623.05" y="264.20" width="10.55" height="10.55" fill="#aaaaaa"/><rect x="623.05" y="276.40" width="10.55" height="10.55" fill="#aaaaaa"/><rect x="623.05" y="288.60" width="10.55" height="10.55" fill="#aaaaaa"/><rect x="623.05" y="300.80" width="10.55" height="10.55" fill="#aaaaaa"/><rect x="623.05" y="313.00" width="10.55" height="10.55" fill="#aaaaaa"/><rect x="623.05" y="325.20" width="10.55" height="10.55" fill="#aaaaaa"/><rect x="623.05" y="337.40" width="10.55" height="10.55" fill="#aaaaaa"/><rect x="635.32" y="264.20" width="10.55" height="10.55" fill="#aaaaaa"/><rect x="635.32" y="276.40" width="10.55" height="10.55" fill="#aaaaaa"/><rect x="635.32" y="288.60" width="10.55" height="10.55" fill="#aaaaaa"/><text x="616.06" y="253.90" text-anchor="middle" font-size="10.3" fill="#d6d6d6">Apr</text><rect x="653.31" y="300.80" width="10.55" height="10.55" fill="#aaaaaa"/><rect x="653.31" y="313.00" width="10.55" height="10.55" fill="#aaaaaa"/><rect x="653.31" y="325.20" width="10.55" height="10.55" fill="#aaaaaa"/><rect x="653.31" y="337.40" width="10.55" height="10.55" fill="#aaaaaa"/><rect x="665.58" y="264.20" width="10.55" height="10.55" fill="#aaaaaa"/><rect x="665.58" y="276.40" width="10.55" height="10.55" fill="#aaaaaa"/><rect x="665.58" y="288.60" width="10.55" height="10.55" fill="#aaaaaa"/><rect x="665.58" y="300.80" width="10.55" height="10.55" fill="#aaaaaa"/><rect x="665.58" y="313.00" width="10.55" height="10.55" fill="#aaaaaa"/><rect x="665.58" y="325.20" width="10.55" height="10.55" fill="#aaaaaa"/><rect x="665.58" y="337.40" width="10.55" height="10.55" fill="#aaaaaa"/><rect x="677.84" y="264.20" width="10.55" height="10.55" fill="#aaaaaa"/><rect x="677.84" y="276.40" width="10.55" height="10.55" fill="#aaaaaa"/><rect x="677.84" y="288.60" width="10.55" height="10.55" fill="#aaaaaa"/><rect x="677.84" y="300.80" width="10.55" height="10.55" fill="#aaaaaa"/><rect x="677.84" y="313.00" width="10.55" height="10.55" fill="#aaaaaa"/><rect x="677.84" y="325.20" width="10.55" height="10.55" fill="#aaaaaa"/><rect x="677.84" y="337.40" width="10.55" height="10.55" fill="#aaaaaa"/><rect x="690.11" y="264.20" width="10.55" height="10.55" fill="#aaaaaa"/><rect x="690.11" y="276.40" width="10.55" height="10.55" fill="#aaaaaa"/><rect x="690.11" y="288.60" width="10.55" height="10.55" fill="#aaaaaa"/><rect x="690.11" y="300.80" width="10.55" height="10.55" fill="#aaaaaa"/><rect x="690.11" y="313.00" width="10.55" height="10.55" fill="#aaaaaa"/><rect x="690.11" y="325.20" width="10.55" height="10.55" fill="#aaaaaa"/><rect x="690.11" y="337.40" width="10.55" height="10.55" fill="#aaaaaa"/><rect x="702.38" y="264.20" width="10.55" height="10.55" fill="#aaaaaa"/><rect x="702.38" y="276.40" width="10.55" height="10.55" fill="#aaaaaa"/><rect x="702.38" y="288.60" width="10.55" height="10.55" fill="#aaaaaa"/><rect x="702.38" y="300.80" width="10.55" height="10.55" fill="#aaaaaa"/><rect x="702.38" y="313.00" width="10.55" height="10.55" fill="#aaaaaa"/><rect x="702.38" y="325.20" width="10.55" height="10.55" fill="#aaaaaa"/><text x="683.12" y="253.90" text-anchor="middle" font-size="10.3" fill="#d6d6d6">May</text><rect x="720.37" y="337.40" width="10.55" height="10.55" fill="#aaaaaa"/><rect x="732.64" y="264.20" width="10.55" height="10.55" fill="#aaaaaa"/><rect x="732.64" y="276.40" width="10.55" height="10.55" fill="#aaaaaa"/><rect x="732.64" y="288.60" width="10.55" height="10.55" fill="#aaaaaa"/><rect x="732.64" y="300.80" width="10.55" height="10.55" fill="#aaaaaa"/><rect x="732.64" y="313.00" width="10.55" height="10.55" fill="#aaaaaa"/><rect x="732.64" y="325.20" width="10.55" height="10.55" fill="#aaaaaa"/><rect x="732.64" y="337.40" width="10.55" height="10.55" fill="#aaaaaa"/><rect x="744.90" y="264.20" width="10.55" height="10.55" fill="#aaaaaa"/><rect x="744.90" y="276.40" width="10.55" height="10.55" fill="#aaaaaa"/><rect x="744.90" y="288.60" width="10.55" height="10.55" fill="#aaaaaa"/><rect x="744.90" y="300.80" width="10.55" height="10.55" fill="#aaaaaa"/><rect x="744.90" y="313.00" width="10.55" height="10.55" fill="#aaaaaa"/><rect x="744.90" y="325.20" width="10.55" height="10.55" fill="#aaaaaa"/><rect x="744.90" y="337.40" width="10.55" height="10.55" fill="#aaaaaa"/><rect x="757.17" y="264.20" width="10.55" height="10.55" fill="#aaaaaa"/><rect x="757.17" y="276.40" width="10.55" height="10.55" fill="#aaaaaa"/><rect x="757.17" y="288.60" width="10.55" height="10.55" fill="#aaaaaa"/><rect x="757.17" y="300.80" width="10.55" height="10.55" fill="#aaaaaa"/><rect x="757.17" y="313.00" width="10.55" height="10.55" fill="#aaaaaa"/><rect x="757.17" y="325.20" width="10.55" height="10.55" fill="#aaaaaa"/><rect x="757.17" y="337.40" width="10.55" height="10.55" fill="#aaaaaa"/><rect x="769.44" y="264.20" width="10.55" height="10.55" fill="#aaaaaa"/><rect x="769.44" y="276.40" width="10.55" height="10.55" fill="#aaaaaa"/><rect x="769.44" y="288.60" width="10.55" height="10.55" fill="#aaaaaa"/><rect x="769.44" y="300.80" width="10.55" height="10.55" fill="#aaaaaa"/><rect x="769.44" y="313.00" width="10.55" height="10.55" fill="#aaaaaa"/><rect x="769.44" y="325.20" width="10.55" height="10.55" fill="#aaaaaa"/><rect x="769.44" y="337.40" width="10.55" height="10.55" fill="#aaaaaa"/><rect x="781.71" y="264.20" width="10.55" height="10.55" fill="#aaaaaa"/><text x="756.31" y="253.90" text-anchor="middle" font-size="10.3" fill="#d6d6d6">Jun</text><rect x="799.70" y="276.40" width="10.55" height="10.55" fill="#aaaaaa"/><rect x="799.70" y="288.60" width="10.55" height="10.55" fill="#aaaaaa"/><rect x="799.70" y="300.80" width="10.55" height="10.55" fill="#aaaaaa"/><rect x="799.70" y="313.00" width="10.55" height="10.55" fill="#aaaaaa"/><rect x="799.70" y="325.20" width="10.55" height="10.55" fill="#aaaaaa"/><rect x="799.70" y="337.40" width="10.55" height="10.55" fill="#aaaaaa"/><rect x="811.96" y="264.20" width="10.55" height="10.55" fill="#aaaaaa"/><rect x="811.96" y="276.40" width="10.55" height="10.55" fill="#aaaaaa"/><rect x="811.96" y="288.60" width="10.55" height="10.55" fill="#aaaaaa"/><rect x="811.96" y="300.80" width="10.55" height="10.55" fill="#aaaaaa"/><rect x="811.96" y="313.00" width="10.55" height="10.55" fill="#aaaaaa"/><rect x="811.96" y="325.20" width="10.55" height="10.55" fill="#aaaaaa"/><rect x="811.96" y="337.40" width="10.55" height="10.55" fill="#aaaaaa"/><rect x="824.23" y="264.20" width="10.55" height="10.55" fill="#aaaaaa"/><rect x="824.23" y="276.40" width="10.55" height="10.55" fill="#aaaaaa"/><rect x="824.23" y="288.60" width="10.55" height="10.55" fill="#aaaaaa"/><rect x="824.23" y="300.80" width="10.55" height="10.55" fill="#aaaaaa"/><rect x="824.23" y="313.00" width="10.55" height="10.55" fill="#aaaaaa"/><rect x="824.23" y="325.20" width="10.55" height="10.55" fill="#aaaaaa"/><rect x="824.23" y="337.40" width="10.55" height="10.55" fill="#aaaaaa"/><rect x="836.50" y="264.20" width="10.55" height="10.55" fill="#aaaaaa"/><rect x="836.50" y="276.40" width="10.55" height="10.55" fill="#aaaaaa"/><rect x="836.50" y="288.60" width="10.55" height="10.55" fill="#aaaaaa"/><rect x="836.50" y="300.80" width="10.55" height="10.55" fill="#aaaaaa"/><rect x="836.50" y="313.00" width="10.55" height="10.55" fill="#aaaaaa"/><rect x="836.50" y="325.20" width="10.55" height="10.55" fill="#aaaaaa"/><rect x="836.50" y="337.40" width="10.55" height="10.55" fill="#aaaaaa"/><rect x="848.77" y="264.20" width="10.55" height="10.55" fill="#aaaaaa"/><rect x="848.77" y="276.40" width="10.55" height="10.55" fill="#aaaaaa"/><rect x="848.77" y="288.60" width="10.55" height="10.55" fill="#aaaaaa"/><rect x="848.77" y="300.80" width="10.55" height="10.55" fill="#aaaaaa"/><text x="829.51" y="253.90" text-anchor="middle" font-size="10.3" fill="#d6d6d6">Jul</text><rect x="866.76" y="313.00" width="10.55" height="10.55" fill="#aaaaaa"/><rect x="866.76" y="325.20" width="10.55" height="10.55" fill="#aaaaaa"/><rect x="866.76" y="337.40" width="10.55" height="10.55" fill="#aaaaaa"/><rect x="879.02" y="264.20" width="10.55" height="10.55" fill="#aaaaaa"/><rect x="879.02" y="276.40" width="10.55" height="10.55" fill="#aaaaaa"/><rect x="879.02" y="288.60" width="10.55" height="10.55" fill="#aaaaaa"/><rect x="879.02" y="300.80" width="10.55" height="10.55" fill="#aaaaaa"/><rect x="879.02" y="313.00" width="10.55" height="10.55" fill="#aaaaaa"/><rect x="879.02" y="325.20" width="10.55" height="10.55" fill="#aaaaaa"/><rect x="879.02" y="337.40" width="10.55" height="10.55" fill="#aaaaaa"/><rect x="891.29" y="264.20" width="10.55" height="10.55" fill="#aaaaaa"/><rect x="891.29" y="276.40" width="10.55" height="10.55" fill="#aaaaaa"/><rect x="891.29" y="288.60" width="10.55" height="10.55" fill="#aaaaaa"/><rect x="891.29" y="300.80" width="10.55" height="10.55" fill="#aaaaaa"/><rect x="891.29" y="313.00" width="10.55" height="10.55" fill="#aaaaaa"/><rect x="891.29" y="325.20" width="10.55" height="10.55" fill="#aaaaaa"/><rect x="891.29" y="337.40" width="10.55" height="10.55" fill="#aaaaaa"/><rect x="903.56" y="264.20" width="10.55" height="10.55" fill="#aaaaaa"/><rect x="903.56" y="276.40" width="10.55" height="10.55" fill="#aaaaaa"/><rect x="903.56" y="288.60" width="10.55" height="10.55" fill="#aaaaaa"/><rect x="903.56" y="300.80" width="10.55" height="10.55" fill="#aaaaaa"/><rect x="903.56" y="313.00" width="10.55" height="10.55" fill="#aaaaaa"/><rect x="903.56" y="325.20" width="10.55" height="10.55" fill="#aaaaaa"/><rect x="903.56" y="337.40" width="10.55" height="10.55" fill="#aaaaaa"/><rect x="915.83" y="264.20" width="10.55" height="10.55" fill="#aaaaaa"/><rect x="915.83" y="276.40" width="10.55" height="10.55" fill="#aaaaaa"/><rect x="915.83" y="288.60" width="10.55" height="10.55" fill="#aaaaaa"/><rect x="915.83" y="300.80" width="10.55" height="10.55" fill="#aaaaaa"/><rect x="915.83" y="313.00" width="10.55" height="10.55" fill="#aaaaaa"/><rect x="915.83" y="325.20" width="10.55" height="10.55" fill="#aaaaaa"/><rect x="915.83" y="337.40" width="10.55" height="10.55" fill="#aaaaaa"/><text x="896.57" y="253.90" text-anchor="middle" font-size="10.3" fill="#d6d6d6">Aug</text><rect x="946.08" y="264.20" width="10.55" height="10.55" fill="#aaaaaa"/><rect x="946.08" y="276.40" width="10.55" height="10.55" fill="#aaaaaa"/><rect x="946.08" y="288.60" width="10.55" height="10.55" fill="#aaaaaa"/><rect x="946.08" y="300.80" width="10.55" height="10.55" fill="#aaaaaa"/><rect x="946.08" y="313.00" width="10.55" height="10.55" fill="#aaaaaa"/><rect x="946.08" y="325.20" width="10.55" height="10.55" fill="#aaaaaa"/><rect x="946.08" y="337.40" width="10.55" height="10.55" fill="#aaaaaa"/><rect x="958.35" y="264.20" width="10.55" height="10.55" fill="#aaaaaa"/><rect x="958.35" y="276.40" width="10.55" height="10.55" fill="#aaaaaa"/><rect x="958.35" y="288.60" width="10.55" height="10.55" fill="#aaaaaa"/><rect x="958.35" y="300.80" width="10.55" height="10.55" fill="#aaaaaa"/><rect x="958.35" y="313.00" width="10.55" height="10.55" fill="#aaaaaa"/><rect x="958.35" y="325.20" width="10.55" height="10.55" fill="#aaaaaa"/><rect x="958.35" y="337.40" width="10.55" height="10.55" fill="#aaaaaa"/><rect x="970.62" y="264.20" width="10.55" height="10.55" fill="#aaaaaa"/><rect x="970.62" y="276.40" width="10.55" height="10.55" fill="#aaaaaa"/><rect x="970.62" y="288.60" width="10.55" height="10.55" fill="#aaaaaa"/><rect x="970.62" y="300.80" width="10.55" height="10.55" fill="#aaaaaa"/><rect x="970.62" y="313.00" width="10.55" height="10.55" fill="#aaaaaa"/><rect x="970.62" y="325.20" width="10.55" height="10.55" fill="#aaaaaa"/><rect x="970.62" y="337.40" width="10.55" height="10.55" fill="#aaaaaa"/><rect x="982.89" y="264.20" width="10.55" height="10.55" fill="#aaaaaa"/><rect x="982.89" y="276.40" width="10.55" height="10.55" fill="#aaaaaa"/><rect x="982.89" y="288.60" width="10.55" height="10.55" fill="#aaaaaa"/><rect x="982.89" y="300.80" width="10.55" height="10.55" fill="#aaaaaa"/><rect x="982.89" y="313.00" width="10.55" height="10.55" fill="#aaaaaa"/><rect x="982.89" y="325.20" width="10.55" height="10.55" fill="#aaaaaa"/><rect x="982.89" y="337.40" width="10.55" height="10.55" fill="#aaaaaa"/><rect x="995.16" y="264.20" width="10.55" height="10.55" fill="#aaaaaa"/><rect x="995.16" y="276.40" width="10.55" height="10.55" fill="#aaaaaa"/><text x="975.89" y="253.90" text-anchor="middle" font-size="10.3" fill="#d6d6d6">Sep</text><rect x="1013.14" y="288.60" width="10.55" height="10.55" fill="#aaaaaa"/><rect x="1013.14" y="300.80" width="10.55" height="10.55" fill="#aaaaaa"/><rect x="1013.14" y="313.00" width="10.55" height="10.55" fill="#aaaaaa"/><rect x="1013.14" y="325.20" width="10.55" height="10.55" fill="#aaaaaa"/><rect x="1013.14" y="337.40" width="10.55" height="10.55" fill="#aaaaaa"/><rect x="1025.41" y="264.20" width="10.55" height="10.55" fill="#aaaaaa"/><rect x="1025.41" y="276.40" width="10.55" height="10.55" fill="#aaaaaa"/><rect x="1025.41" y="288.60" width="10.55" height="10.55" fill="#aaaaaa"/><rect x="1025.41" y="300.80" width="10.55" height="10.55" fill="#aaaaaa"/><rect x="1025.41" y="313.00" width="10.55" height="10.55" fill="#aaaaaa"/><rect x="1025.41" y="325.20" width="10.55" height="10.55" fill="#aaaaaa"/><rect x="1025.41" y="337.40" width="10.55" height="10.55" fill="#aaaaaa"/><rect x="1037.68" y="264.20" width="10.55" height="10.55" fill="#aaaaaa"/><rect x="1037.68" y="276.40" width="10.55" height="10.55" fill="#aaaaaa"/><rect x="1037.68" y="288.60" width="10.55" height="10.55" fill="#aaaaaa"/><rect x="1037.68" y="300.80" width="10.55" height="10.55" fill="#aaaaaa"/><rect x="1037.68" y="313.00" width="10.55" height="10.55" fill="#aaaaaa"/><rect x="1037.68" y="325.20" width="10.55" height="10.55" fill="#aaaaaa"/><rect x="1037.68" y="337.40" width="10.55" height="10.55" fill="#aaaaaa"/><rect x="1049.95" y="264.20" width="10.55" height="10.55" fill="#aaaaaa"/><rect x="1049.95" y="276.40" width="10.55" height="10.55" fill="#aaaaaa"/><rect x="1049.95" y="288.60" width="10.55" height="10.55" fill="#aaaaaa"/><rect x="1049.95" y="300.80" width="10.55" height="10.55" fill="#aaaaaa"/><rect x="1049.95" y="313.00" width="10.55" height="10.55" fill="#aaaaaa"/><rect x="1049.95" y="325.20" width="10.55" height="10.55" fill="#aaaaaa"/><rect x="1049.95" y="337.40" width="10.55" height="10.55" fill="#aaaaaa"/><rect x="1062.22" y="264.20" width="10.55" height="10.55" fill="#aaaaaa"/><rect x="1062.22" y="276.40" width="10.55" height="10.55" fill="#aaaaaa"/><rect x="1062.22" y="288.60" width="10.55" height="10.55" fill="#aaaaaa"/><rect x="1062.22" y="300.80" width="10.55" height="10.55" fill="#aaaaaa"/><rect x="1062.22" y="313.00" width="10.55" height="10.55" fill="#aaaaaa"/><text x="1042.95" y="253.90" text-anchor="middle" font-size="10.3" fill="#d6d6d6">Oct</text><rect x="1080.20" y="325.20" width="10.55" height="10.55" fill="#aaaaaa"/><rect x="1080.20" y="337.40" width="10.55" height="10.55" fill="#aaaaaa"/><rect x="1092.47" y="264.20" width="10.55" height="10.55" fill="#aaaaaa"/><rect x="1092.47" y="276.40" width="10.55" height="10.55" fill="#aaaaaa"/><rect x="1092.47" y="288.60" width="10.55" height="10.55" fill="#aaaaaa"/><rect x="1092.47" y="300.80" width="10.55" height="10.55" fill="#aaaaaa"/><rect x="1092.47" y="313.00" width="10.55" height="10.55" fill="#aaaaaa"/><rect x="1092.47" y="325.20" width="10.55" height="10.55" fill="#aaaaaa"/><rect x="1092.47" y="337.40" width="10.55" height="10.55" fill="#aaaaaa"/><rect x="1104.74" y="264.20" width="10.55" height="10.55" fill="#aaaaaa"/><rect x="1104.74" y="276.40" width="10.55" height="10.55" fill="#aaaaaa"/><rect x="1104.74" y="288.60" width="10.55" height="10.55" fill="#aaaaaa"/><rect x="1104.74" y="300.80" width="10.55" height="10.55" fill="#aaaaaa"/><rect x="1104.74" y="313.00" width="10.55" height="10.55" fill="#aaaaaa"/><rect x="1104.74" y="325.20" width="10.55" height="10.55" fill="#aaaaaa"/><rect x="1104.74" y="337.40" width="10.55" height="10.55" fill="#aaaaaa"/><rect x="1117.01" y="264.20" width="10.55" height="10.55" fill="#aaaaaa"/><rect x="1117.01" y="276.40" width="10.55" height="10.55" fill="#aaaaaa"/><rect x="1117.01" y="288.60" width="10.55" height="10.55" fill="#aaaaaa"/><rect x="1117.01" y="300.80" width="10.55" height="10.55" fill="#aaaaaa"/><rect x="1117.01" y="313.00" width="10.55" height="10.55" fill="#aaaaaa"/><rect x="1117.01" y="325.20" width="10.55" height="10.55" fill="#aaaaaa"/><rect x="1117.01" y="337.40" width="10.55" height="10.55" fill="#aaaaaa"/><rect x="1129.28" y="264.20" width="10.55" height="10.55" fill="#aaaaaa"/><rect x="1129.28" y="276.40" width="10.55" height="10.55" fill="#aaaaaa"/><rect x="1129.28" y="288.60" width="10.55" height="10.55" fill="#aaaaaa"/><rect x="1129.28" y="300.80" width="10.55" height="10.55" fill="#aaaaaa"/><rect x="1129.28" y="313.00" width="10.55" height="10.55" fill="#aaaaaa"/><rect x="1129.28" y="325.20" width="10.55" height="10.55" fill="#aaaaaa"/><rect x="1129.28" y="337.40" width="10.55" height="10.55" fill="#aaaaaa"/><text x="1110.01" y="253.90" text-anchor="middle" font-size="10.3" fill="#d6d6d6">Nov</text><rect x="1159.53" y="264.20" width="10.55" height="10.55" fill="#aaaaaa"/><rect x="1159.53" y="276.40" width="10.55" height="10.55" fill="#aaaaaa"/><rect x="1159.53" y="288.60" width="10.55" height="10.55" fill="#aaaaaa"/><rect x="1159.53" y="300.80" width="10.55" height="10.55" fill="#aaaaaa"/><rect x="1159.53" y="313.00" width="10.55" height="10.55" fill="#aaaaaa"/><rect x="1159.53" y="325.20" width="10.55" height="10.55" fill="#aaaaaa"/><rect x="1159.53" y="337.40" width="10.55" height="10.55" fill="#aaaaaa"/><rect x="1171.80" y="264.20" width="10.55" height="10.55" fill="#aaaaaa"/><rect x="1171.80" y="276.40" width="10.55" height="10.55" fill="#aaaaaa"/><rect x="1171.80" y="288.60" width="10.55" height="10.55" fill="#aaaaaa"/><rect x="1171.80" y="300.80" width="10.55" height="10.55" fill="#aaaaaa"/><rect x="1171.80" y="313.00" width="10.55" height="10.55" fill="#aaaaaa"/><rect x="1171.80" y="325.20" width="10.55" height="10.55" fill="#aaaaaa"/><rect x="1171.80" y="337.40" width="10.55" height="10.55" fill="#aaaaaa"/><rect x="1184.07" y="264.20" width="10.55" height="10.55" fill="#aaaaaa"/><rect x="1184.07" y="276.40" width="10.55" height="10.55" fill="#aaaaaa"/><rect x="1184.07" y="288.60" width="10.55" height="10.55" fill="#aaaaaa"/><rect x="1184.07" y="300.80" width="10.55" height="10.55" fill="#aaaaaa"/><rect x="1184.07" y="313.00" width="10.55" height="10.55" fill="#aaaaaa"/><rect x="1184.07" y="325.20" width="10.55" height="10.55" fill="#aaaaaa"/><rect x="1184.07" y="337.40" width="10.55" height="10.55" fill="#aaaaaa"/><rect x="1196.34" y="264.20" width="10.55" height="10.55" fill="#aaaaaa"/><rect x="1196.34" y="276.40" width="10.55" height="10.55" fill="#aaaaaa"/><rect x="1196.34" y="288.60" width="10.55" height="10.55" fill="#aaaaaa"/><rect x="1196.34" y="300.80" width="10.55" height="10.55" fill="#aaaaaa"/><rect x="1196.34" y="313.00" width="10.55" height="10.55" fill="#aaaaaa"/><rect x="1196.34" y="325.20" width="10.55" height="10.55" fill="#aaaaaa"/><rect x="1196.34" y="337.40" width="10.55" height="10.55" fill="#aaaaaa"/><rect x="1208.60" y="264.20" width="10.55" height="10.55" fill="#aaaaaa"/><rect x="1208.60" y="276.40" width="10.55" height="10.55" fill="#aaaaaa"/><rect x="1208.60" y="288.60" width="10.55" height="10.55" fill="#aaaaaa"/><text x="1189.34" y="253.90" text-anchor="middle" font-size="10.3" fill="#d6d6d6">Dec</text><text x="0" y="0" transform="translate(363.2 305.90) rotate(-90)" text-anchor="middle" font-size="10.3" fill="#d6d6d6">2024</text></g></svg>
<div class="t" style="left:1222.70px;top:109.69px;font-size:12.5px;color:#eef0f3;font-weight:bold;letter-spacing:0.312px;">Latest Alerts</div>
<div class="b" style="left:1222px;top:144px;width:732px;height:39px;border:1px solid #213044;border-radius:5px;box-sizing:border-box"></div>
<div class="t" style="left:1233.00px;top:156.48px;font-size:13.5px;color:#8a9cb6;letter-spacing:-0.315px;">Source</div>
<div class="t" style="left:1388.80px;top:156.48px;font-size:13.5px;color:#8a9cb6;letter-spacing:0.360px;">Latest Alert</div>
<div class="t" style="left:1559.10px;top:156.48px;font-size:13.5px;color:#8a9cb6;letter-spacing:0.098px;">Alerts</div>
<svg style="left:0;top:0" width="2048" height="998"><circle cx="1243.60" cy="201.00" r="6.00" fill="none" stroke="#d8413c" stroke-width="1.5"/><path d="M1243.60 197.80 L1243.60 201.80" stroke="#d8413c" stroke-width="1.6" stroke-linecap="round"/><circle cx="1243.60" cy="203.90" r="0.95" fill="#d8413c"/><circle cx="1571.00" cy="201.00" r="6.00" fill="none" stroke="#d8413c" stroke-width="1.5"/><path d="M1571.00 197.80 L1571.00 201.80" stroke="#d8413c" stroke-width="1.6" stroke-linecap="round"/><circle cx="1571.00" cy="203.90" r="0.95" fill="#d8413c"/></svg>
<div class="t" style="left:1255.70px;top:193.99px;font-size:12.5px;color:#4f8be8;letter-spacing:-0.645px;">192.168.145.90</div>
<div class="t" style="left:1388.90px;top:193.99px;font-size:12.5px;color:#e3e6eb;letter-spacing:-0.091px;">2024-03-21 11:49:58</div>
<div class="t" style="left:1583.10px;top:193.99px;font-size:12.5px;color:#4f8be8;letter-spacing:-0.359px;">Memory Usage</div>
<div class="t" style="left:1664.50px;top:193.99px;font-size:12.5px;color:#e3e6eb;">,</div>
<div class="t" style="left:1670.20px;top:193.99px;font-size:12.5px;color:#4f8be8;letter-spacing:-0.259px;">Example Service Check</div>
<div class="t" style="left:1801.50px;top:193.99px;font-size:12.5px;color:#e3e6eb;letter-spacing:-0.048px;">are Critical</div>
<div class="b" style="left:1222px;top:219px;width:732px;height:1px;background:#213044"></div>
<div class="t" style="left:1222.70px;top:239.80px;font-size:10.5px;color:#8398b8;letter-spacing:0.085px;">Last Updated: 2024-03-21 14:45:55</div>
<div class="t" style="left:354.40px;top:456.79px;font-size:12.5px;color:#eef0f3;font-weight:bold;letter-spacing:0.214px;">Server Statistics</div>
<div class="b" style="left:354px;top:492px;width:292.5px;height:34px;border:1px solid #213044;border-radius:5px;box-sizing:border-box"></div>
<div class="t" style="left:362.80px;top:501.78px;font-size:13.5px;color:#8a9cb6;letter-spacing:0.150px;">Metric</div>
<div class="t" style="left:454.40px;top:501.78px;font-size:13.5px;color:#8a9cb6;letter-spacing:-0.257px;">Value</div>
<div class="b" style="left:354px;top:559px;width:292.5px;height:1px;background:#213044"></div>
<div class="b" style="left:354px;top:592px;width:292.5px;height:1px;background:#213044"></div>
<div class="b" style="left:354px;top:625px;width:292.5px;height:1px;background:#213044"></div>
<div class="b" style="left:354px;top:658px;width:292.5px;height:1px;background:#213044"></div>
<div class="b" style="left:354px;top:691px;width:292.5px;height:1px;background:#213044"></div>
<div class="b" style="left:354px;top:724px;width:292.5px;height:1px;background:#213044"></div>
<div class="b" style="left:354px;top:757px;width:292.5px;height:1px;background:#213044"></div>
<div class="b" style="left:354px;top:790px;width:292.5px;height:1px;background:#213044"></div>
<div class="b" style="left:354px;top:824px;width:292.5px;height:1px;background:#213044"></div>
<div class="b" style="left:354px;top:857px;width:292.5px;height:1px;background:#213044"></div>
<div class="b" style="left:354px;top:890px;width:292.5px;height:1px;background:#213044"></div>
<div class="b" style="left:354px;top:923px;width:292.5px;height:1px;background:#213044"></div>
<div class="b" style="left:354px;top:956px;width:292.5px;height:1px;background:#213044"></div>
<div class="t" style="left:361.60px;top:536.14px;font-size:12.5px;color:#e3e6eb;letter-spacing:-0.769px;">Load</div>
<div class="t" style="left:365.70px;top:569.44px;font-size:12.5px;color:#e3e6eb;letter-spacing:-0.564px;">1-min</div>
<div class="t" style="left:493.50px;top:569.44px;font-size:12.5px;color:#e3e6eb;letter-spacing:-0.609px;">0.19</div>
<div class="b" style="left:530.9px;top:572.0px;width:2.5px;height:9px;background:#00e05a;border-radius:1.5px"></div>
<div class="t" style="left:365.70px;top:602.29px;font-size:12.5px;color:#e3e6eb;letter-spacing:-0.064px;">5-min</div>
<div class="t" style="left:491.50px;top:602.29px;font-size:12.5px;color:#e3e6eb;letter-spacing:0.057px;">0.23</div>
<div class="b" style="left:530.9px;top:604.8px;width:2.5px;height:9px;background:#00e05a;border-radius:1.5px"></div>
<div class="t" style="left:365.70px;top:635.24px;font-size:12.5px;color:#e3e6eb;letter-spacing:-0.441px;">15-min</div>
<div class="t" style="left:493.50px;top:635.24px;font-size:12.5px;color:#e3e6eb;letter-spacing:-0.609px;">0.31</div>
<div class="b" style="left:530.9px;top:637.8px;width:2.5px;height:9px;background:#00e05a;border-radius:1.5px"></div>
<div class="t" style="left:361.60px;top:668.29px;font-size:12.5px;color:#e3e6eb;letter-spacing:-0.419px;">CPU Stats</div>
<div class="t" style="left:366.00px;top:701.34px;font-size:12.5px;color:#e3e6eb;letter-spacing:-0.630px;">User</div>
<div class="t" style="left:483.00px;top:701.34px;font-size:12.5px;color:#e3e6eb;letter-spacing:-0.611px;">2.93%</div>
<div class="b" style="left:530.9px;top:703.8px;width:3px;height:9px;background:#00e05a;border-radius:1.5px"></div>
<div class="t" style="left:366.00px;top:734.39px;font-size:12.5px;color:#e3e6eb;letter-spacing:-0.335px;">Nice</div>
<div class="t" style="left:482.00px;top:734.39px;font-size:12.5px;color:#e3e6eb;letter-spacing:-0.361px;">0.00%</div>
<div class="b" style="left:530.9px;top:736.9px;width:1.2px;height:9px;background:#00e05a;border-radius:1.5px"></div>
<div class="t" style="left:366.00px;top:767.54px;font-size:12.5px;color:#e3e6eb;letter-spacing:-0.435px;">System</div>
<div class="t" style="left:486.50px;top:767.54px;font-size:12.5px;color:#e3e6eb;letter-spacing:-1.486px;">1.72%</div>
<div class="b" style="left:530.9px;top:770.0px;width:2.5px;height:9px;background:#00e05a;border-radius:1.5px"></div>
<div class="t" style="left:366.00px;top:800.89px;font-size:12.5px;color:#e3e6eb;letter-spacing:-0.026px;">I/O Wait</div>
<div class="t" style="left:482.00px;top:800.89px;font-size:12.5px;color:#e3e6eb;letter-spacing:-0.361px;">0.00%</div>
<div class="b" style="left:530.9px;top:803.4px;width:1.2px;height:9px;background:#00e05a;border-radius:1.5px"></div>
<div class="t" style="left:366.00px;top:834.24px;font-size:12.5px;color:#e3e6eb;letter-spacing:-0.123px;">Steal</div>
<div class="t" style="left:482.00px;top:834.24px;font-size:12.5px;color:#e3e6eb;letter-spacing:-0.361px;">0.00%</div>
<div class="b" style="left:530.9px;top:836.8px;width:1.2px;height:9px;background:#00e05a;border-radius:1.5px"></div>
<div class="t" style="left:366.00px;top:867.39px;font-size:12.5px;color:#e3e6eb;letter-spacing:-0.218px;">Idle</div>
<div class="t" style="left:476.50px;top:867.39px;font-size:12.5px;color:#e3e6eb;letter-spacing:-0.579px;">95.36%</div>
<div class="b" style="left:530.9px;top:869.6px;width:86.7px;height:9px;background:#00e05a;border-radius:2px"></div>
<div class="t" style="left:361.40px;top:900.39px;font-size:12.5px;color:#e3e6eb;letter-spacing:-0.328px;">Memory</div>
<div class="t" style="left:366.00px;top:933.29px;font-size:12.5px;color:#e3e6eb;letter-spacing:-0.351px;">Total</div>
<div class="t" style="left:469.00px;top:933.29px;font-size:12.5px;color:#e3e6eb;letter-spacing:-0.505px;">1744 MB</div>
<div class="t" style="left:701.60px;top:457.29px;font-size:12.5px;color:#eef0f3;font-weight:bold;letter-spacing:-0.037px;">Status Grid</div>
<div class="b" style="left:701px;top:491.5px;width:426px;height:38px;border:1px solid #213044;border-radius:5px;box-sizing:border-box"></div>
<div class="t" style="left:711.40px;top:504.08px;font-size:13.5px;color:#8a9cb6;letter-spacing:-0.002px;">Hosts</div>
<div class="t" style="left:832.70px;top:504.08px;font-size:13.5px;color:#8a9cb6;letter-spacing:-0.038px;">Services</div>
<div class="b" style="left:701px;top:572px;width:426px;height:1px;background:#213044"></div>
<div class="b" style="left:701px;top:615px;width:426px;height:1px;background:#213044"></div>
<div class="b" style="left:701px;top:658px;width:426px;height:1px;background:#213044"></div>
<div class="b" style="left:701px;top:701px;width:426px;height:1px;background:#213044"></div>
<div class="t" style="left:734.60px;top:543.79px;font-size:12.5px;color:#4f8be8;letter-spacing:-0.953px;">192.168.14.21</div>
<div class="t" style="left:734.60px;top:586.99px;font-size:12.5px;color:#4f8be8;letter-spacing:-0.989px;">192.168.145.181</div>
<div class="t" style="left:734.60px;top:629.59px;font-size:12.5px;color:#4f8be8;letter-spacing:-0.607px;">192.168.145.90</div>
<div class="t" style="left:734.60px;top:672.89px;font-size:12.5px;color:#4f8be8;letter-spacing:0.146px;">localhost</div>
<svg style="left:0;top:0" width="2048" height="998"><circle cx="722.30" cy="550.70" r="6.00" fill="none" stroke="#22cc5e" stroke-width="1.5"/><path d="M719.40 550.80 L721.50 552.90 L725.30 548.50" fill="none" stroke="#22cc5e" stroke-width="1.5" stroke-linecap="round" stroke-linejoin="round"/><circle cx="844.60" cy="550.70" r="6.00" fill="none" stroke="#22cc5e" stroke-width="1.5"/><path d="M841.70 550.80 L843.80 552.90 L847.60 548.50" fill="none" stroke="#22cc5e" stroke-width="1.5" stroke-linecap="round" stroke-linejoin="round"/><circle cx="868.44" cy="550.70" r="6.00" fill="none" stroke="#22cc5e" stroke-width="1.5"/><path d="M865.54 550.80 L867.64 552.90 L871.44 548.50" fill="none" stroke="#22cc5e" stroke-width="1.5" stroke-linecap="round" stroke-linejoin="round"/><circle cx="892.28" cy="550.70" r="6.00" fill="none" stroke="#22cc5e" stroke-width="1.5"/><path d="M889.38 550.80 L891.48 552.90 L895.28 548.50" fill="none" stroke="#22cc5e" stroke-width="1.5" stroke-linecap="round" stroke-linejoin="round"/><circle cx="916.12" cy="550.70" r="6.00" fill="none" stroke="#22cc5e" stroke-width="1.5"/><path d="M913.22 550.80 L915.32 552.90 L919.12 548.50" fill="none" stroke="#22cc5e" stroke-width="1.5" stroke-linecap="round" stroke-linejoin="round"/><circle cx="939.96" cy="550.70" r="6.00" fill="none" stroke="#22cc5e" stroke-width="1.5"/><path d="M937.06 550.80 L939.16 552.90 L942.96 548.50" fill="none" stroke="#22cc5e" stroke-width="1.5" stroke-linecap="round" stroke-linejoin="round"/><circle cx="963.80" cy="550.70" r="6.00" fill="none" stroke="#22cc5e" stroke-width="1.5"/><path d="M960.90 550.80 L963.00 552.90 L966.80 548.50" fill="none" stroke="#22cc5e" stroke-width="1.5" stroke-linecap="round" stroke-linejoin="round"/><circle cx="987.64" cy="550.70" r="6.00" fill="none" stroke="#22cc5e" stroke-width="1.5"/><path d="M984.74 550.80 L986.84 552.90 L990.64 548.50" fill="none" stroke="#22cc5e" stroke-width="1.5" stroke-linecap="round" stroke-linejoin="round"/><circle cx="1011.48" cy="550.70" r="6.00" fill="none" stroke="#22cc5e" stroke-width="1.5"/><path d="M1008.58 550.80 L1010.68 552.90 L1014.48 548.50" fill="none" stroke="#22cc5e" stroke-width="1.5" stroke-linecap="round" stroke-linejoin="round"/><circle cx="1035.32" cy="550.70" r="6.00" fill="none" stroke="#22cc5e" stroke-width="1.5"/><path d="M1032.42 550.80 L1034.52 552.90 L1038.32 548.50" fill="none" stroke="#22cc5e" stroke-width="1.5" stroke-linecap="round" stroke-linejoin="round"/><circle cx="722.30" cy="593.90" r="6.00" fill="none" stroke="#22cc5e" stroke-width="1.5"/><path d="M719.40 594.00 L721.50 596.10 L725.30 591.70" fill="none" stroke="#22cc5e" stroke-width="1.5" stroke-linecap="round" stroke-linejoin="round"/><circle cx="844.60" cy="593.90" r="6.00" fill="none" stroke="#22cc5e" stroke-width="1.5"/><path d="M841.70 594.00 L843.80 596.10 L847.60 591.70" fill="none" stroke="#22cc5e" stroke-width="1.5" stroke-linecap="round" stroke-linejoin="round"/><circle cx="868.44" cy="593.90" r="6.00" fill="none" stroke="#22cc5e" stroke-width="1.5"/><path d="M865.54 594.00 L867.64 596.10 L871.44 591.70" fill="none" stroke="#22cc5e" stroke-width="1.5" stroke-linecap="round" stroke-linejoin="round"/><circle cx="892.28" cy="593.90" r="6.00" fill="none" stroke="#22cc5e" stroke-width="1.5"/><path d="M889.38 594.00 L891.48 596.10 L895.28 591.70" fill="none" stroke="#22cc5e" stroke-width="1.5" stroke-linecap="round" stroke-linejoin="round"/><circle cx="916.12" cy="593.90" r="6.00" fill="none" stroke="#22cc5e" stroke-width="1.5"/><path d="M913.22 594.00 L915.32 596.10 L919.12 591.70" fill="none" stroke="#22cc5e" stroke-width="1.5" stroke-linecap="round" stroke-linejoin="round"/><circle cx="939.96" cy="593.90" r="6.00" fill="none" stroke="#22cc5e" stroke-width="1.5"/><path d="M937.06 594.00 L939.16 596.10 L942.96 591.70" fill="none" stroke="#22cc5e" stroke-width="1.5" stroke-linecap="round" stroke-linejoin="round"/><circle cx="963.80" cy="593.90" r="6.00" fill="none" stroke="#22cc5e" stroke-width="1.5"/><path d="M960.90 594.00 L963.00 596.10 L966.80 591.70" fill="none" stroke="#22cc5e" stroke-width="1.5" stroke-linecap="round" stroke-linejoin="round"/><circle cx="987.64" cy="593.90" r="6.00" fill="none" stroke="#22cc5e" stroke-width="1.5"/><path d="M984.74 594.00 L986.84 596.10 L990.64 591.70" fill="none" stroke="#22cc5e" stroke-width="1.5" stroke-linecap="round" stroke-linejoin="round"/><circle cx="722.30" cy="636.50" r="6.00" fill="none" stroke="#22cc5e" stroke-width="1.5"/><path d="M719.40 636.60 L721.50 638.70 L725.30 634.30" fill="none" stroke="#22cc5e" stroke-width="1.5" stroke-linecap="round" stroke-linejoin="round"/><circle cx="844.60" cy="636.50" r="6.00" fill="none" stroke="#22cc5e" stroke-width="1.5"/><path d="M841.70 636.60 L843.80 638.70 L847.60 634.30" fill="none" stroke="#22cc5e" stroke-width="1.5" stroke-linecap="round" stroke-linejoin="round"/><circle cx="868.44" cy="636.50" r="6.00" fill="none" stroke="#22cc5e" stroke-width="1.5"/><path d="M865.54 636.60 L867.64 638.70 L871.44 634.30" fill="none" stroke="#22cc5e" stroke-width="1.5" stroke-linecap="round" stroke-linejoin="round"/><circle cx="892.28" cy="636.50" r="6.00" fill="none" stroke="#22cc5e" stroke-width="1.5"/><path d="M889.38 636.60 L891.48 638.70 L895.28 634.30" fill="none" stroke="#22cc5e" stroke-width="1.5" stroke-linecap="round" stroke-linejoin="round"/><circle cx="916.12" cy="636.50" r="6.00" fill="none" stroke="#22cc5e" stroke-width="1.5"/><path d="M913.22 636.60 L915.32 638.70 L919.12 634.30" fill="none" stroke="#22cc5e" stroke-width="1.5" stroke-linecap="round" stroke-linejoin="round"/><circle cx="939.96" cy="636.50" r="6.00" fill="none" stroke="#22cc5e" stroke-width="1.5"/><path d="M937.06 636.60 L939.16 638.70 L942.96 634.30" fill="none" stroke="#22cc5e" stroke-width="1.5" stroke-linecap="round" stroke-linejoin="round"/><circle cx="963.80" cy="636.50" r="6.00" fill="none" stroke="#d8413c" stroke-width="1.5"/><path d="M963.80 633.30 L963.80 637.30" stroke="#d8413c" stroke-width="1.6" stroke-linecap="round"/><circle cx="963.80" cy="639.40" r="0.95" fill="#d8413c"/><circle cx="987.64" cy="636.50" r="6.00" fill="none" stroke="#22cc5e" stroke-width="1.5"/><path d="M984.74 636.60 L986.84 638.70 L990.64 634.30" fill="none" stroke="#22cc5e" stroke-width="1.5" stroke-linecap="round" stroke-linejoin="round"/><circle cx="1011.48" cy="636.50" r="6.00" fill="none" stroke="#d8413c" stroke-width="1.5"/><path d="M1011.48 633.30 L1011.48 637.30" stroke="#d8413c" stroke-width="1.6" stroke-linecap="round"/><circle cx="1011.48" cy="639.40" r="0.95" fill="#d8413c"/><circle cx="1035.32" cy="636.50" r="6.00" fill="none" stroke="#22cc5e" stroke-width="1.5"/><path d="M1032.42 636.60 L1034.52 638.70 L1038.32 634.30" fill="none" stroke="#22cc5e" stroke-width="1.5" stroke-linecap="round" stroke-linejoin="round"/><circle cx="1059.16" cy="636.50" r="6.00" fill="none" stroke="#22cc5e" stroke-width="1.5"/><path d="M1056.26 636.60 L1058.36 638.70 L1062.16 634.30" fill="none" stroke="#22cc5e" stroke-width="1.5" stroke-linecap="round" stroke-linejoin="round"/><circle cx="722.30" cy="679.80" r="6.00" fill="none" stroke="#22cc5e" stroke-width="1.5"/><path d="M719.40 679.90 L721.50 682.00 L725.30 677.60" fill="none" stroke="#22cc5e" stroke-width="1.5" stroke-linecap="round" stroke-linejoin="round"/><circle cx="844.60" cy="679.80" r="6.00" fill="none" stroke="#22cc5e" stroke-width="1.5"/><path d="M841.70 679.90 L843.80 682.00 L847.60 677.60" fill="none" stroke="#22cc5e" stroke-width="1.5" stroke-linecap="round" stroke-linejoin="round"/><circle cx="868.44" cy="679.80" r="6.00" fill="none" stroke="#22cc5e" stroke-width="1.5"/><path d="M865.54 679.90 L867.64 682.00 L871.44 677.60" fill="none" stroke="#22cc5e" stroke-width="1.5" stroke-linecap="round" stroke-linejoin="round"/><circle cx="892.28" cy="679.80" r="6.00" fill="none" stroke="#22cc5e" stroke-width="1.5"/><path d="M889.38 679.90 L891.48 682.00 L895.28 677.60" fill="none" stroke="#22cc5e" stroke-width="1.5" stroke-linecap="round" stroke-linejoin="round"/><circle cx="916.12" cy="679.80" r="6.00" fill="none" stroke="#22cc5e" stroke-width="1.5"/><path d="M913.22 679.90 L915.32 682.00 L919.12 677.60" fill="none" stroke="#22cc5e" stroke-width="1.5" stroke-linecap="round" stroke-linejoin="round"/><circle cx="939.96" cy="679.80" r="6.00" fill="none" stroke="#22cc5e" stroke-width="1.5"/><path d="M937.06 679.90 L939.16 682.00 L942.96 677.60" fill="none" stroke="#22cc5e" stroke-width="1.5" stroke-linecap="round" stroke-linejoin="round"/><circle cx="963.80" cy="679.80" r="6.00" fill="none" stroke="#22cc5e" stroke-width="1.5"/><path d="M960.90 679.90 L963.00 682.00 L966.80 677.60" fill="none" stroke="#22cc5e" stroke-width="1.5" stroke-linecap="round" stroke-linejoin="round"/><circle cx="987.64" cy="679.80" r="6.00" fill="none" stroke="#22cc5e" stroke-width="1.5"/><path d="M984.74 679.90 L986.84 682.00 L990.64 677.60" fill="none" stroke="#22cc5e" stroke-width="1.5" stroke-linecap="round" stroke-linejoin="round"/><circle cx="1011.48" cy="679.80" r="6.00" fill="none" stroke="#22cc5e" stroke-width="1.5"/><path d="M1008.58 679.90 L1010.68 682.00 L1014.48 677.60" fill="none" stroke="#22cc5e" stroke-width="1.5" stroke-linecap="round" stroke-linejoin="round"/><circle cx="1035.32" cy="679.80" r="6.00" fill="none" stroke="#22cc5e" stroke-width="1.5"/><path d="M1032.42 679.90 L1034.52 682.00 L1038.32 677.60" fill="none" stroke="#22cc5e" stroke-width="1.5" stroke-linecap="round" stroke-linejoin="round"/><circle cx="1059.16" cy="679.80" r="6.00" fill="none" stroke="#22cc5e" stroke-width="1.5"/><path d="M1056.26 679.90 L1058.36 682.00 L1062.16 677.60" fill="none" stroke="#22cc5e" stroke-width="1.5" stroke-linecap="round" stroke-linejoin="round"/><circle cx="1083.00" cy="679.80" r="6.00" fill="none" stroke="#22cc5e" stroke-width="1.5"/><path d="M1080.10 679.90 L1082.20 682.00 L1086.00 677.60" fill="none" stroke="#22cc5e" stroke-width="1.5" stroke-linecap="round" stroke-linejoin="round"/><circle cx="1106.84" cy="679.80" r="6.00" fill="none" stroke="#22cc5e" stroke-width="1.5"/><path d="M1103.94 679.90 L1106.04 682.00 L1109.84 677.60" fill="none" stroke="#22cc5e" stroke-width="1.5" stroke-linecap="round" stroke-linejoin="round"/></svg>
<div class="t" style="left:701.60px;top:703.00px;font-size:10.5px;color:#8398b8;letter-spacing:0.085px;">Last Updated: 2024-03-21 14:46:25</div>
<svg style="left:0;top:0" width="2048" height="998"><rect x="1331.10" y="463.8" width="1" height="180.5" fill="#2b3340"/><rect x="1372.37" y="463.8" width="1" height="180.5" fill="#2b3340"/><rect x="1413.63" y="463.8" width="1" height="180.5" fill="#2b3340"/><rect x="1454.90" y="463.8" width="1" height="180.5" fill="#2b3340"/><rect x="1496.17" y="463.8" width="1" height="180.5" fill="#2b3340"/><rect x="1537.44" y="463.8" width="1" height="180.5" fill="#2b3340"/><rect x="1578.70" y="463.8" width="1" height="180.5" fill="#2b3340"/><rect x="1332.10" y="465.70" width="197.08" height="9" fill="#55e35a" stroke="#e8e8e8" stroke-width="1"/><rect x="1332.10" y="511.00" width="131.06" height="9" fill="#55e35a" stroke="#e8e8e8" stroke-width="1"/><rect x="1332.10" y="545.00" width="32.01" height="9" fill="#f0161a" stroke="#e8e8e8" stroke-width="1"/><rect x="1332.10" y="556.30" width="114.55" height="9" fill="#55e35a" stroke="#e8e8e8" stroke-width="1"/><rect x="1332.10" y="601.20" width="147.56" height="9" fill="#55e35a" stroke="#e8e8e8" stroke-width="1"/><circle cx="1268.9" cy="686.6" r="5.6" fill="#55e35a"/><circle cx="1322" cy="686.6" r="5.6" fill="#eeee1a"/><circle cx="1406.5" cy="686.6" r="5.6" fill="#eba33a"/><circle cx="1497.1" cy="686.6" r="5.6" fill="#f0161a"/><rect x="1557.7" y="464.5" width="22.2" height="19.7" rx="2" fill="#131a23"/><rect x="1561.2" y="468.1" width="15.6" height="2.4" rx="1.2" fill="#e6e6e6"/><rect x="1561.2" y="473.3" width="15.6" height="2.4" rx="1.2" fill="#e6e6e6"/><rect x="1561.2" y="478.5" width="15.6" height="2.4" rx="1.2" fill="#e6e6e6"/></svg>
<div class="t" style="left:1272.30px;top:480.05px;font-size:11px;color:#4f86e0;font-weight:bold;letter-spacing:-0.285px;">localhost</div>
<div class="t" style="left:1239.30px;top:525.04px;font-size:11px;color:#4f86e0;font-weight:bold;letter-spacing:0.196px;">192.168.145.90</div>
<div class="t" style="left:1232.30px;top:570.34px;font-size:11px;color:#4f86e0;font-weight:bold;letter-spacing:0.245px;">192.168.145.181</div>
<div class="t" style="left:1245.30px;top:615.64px;font-size:11px;color:#4f86e0;font-weight:bold;letter-spacing:0.222px;">192.168.14.21</div>
<div class="t" style="left:1328.68px;top:651.70px;font-size:10.5px;color:#b9c1ce;font-weight:bold;">0</div>
<div class="t" style="left:1365.57px;top:651.70px;font-size:10.5px;color:#b9c1ce;font-weight:bold;">2.5</div>
<div class="t" style="left:1411.22px;top:651.70px;font-size:10.5px;color:#b9c1ce;font-weight:bold;">5</div>
<div class="t" style="left:1448.10px;top:651.70px;font-size:10.5px;color:#b9c1ce;font-weight:bold;">7.5</div>
<div class="t" style="left:1490.83px;top:651.70px;font-size:10.5px;color:#b9c1ce;font-weight:bold;">10</div>
<div class="t" style="left:1527.72px;top:651.70px;font-size:10.5px;color:#b9c1ce;font-weight:bold;">12.5</div>
<div class="t" style="left:1567.82px;top:651.70px;font-size:10.5px;color:#b9c1ce;font-weight:bold;">15</div>
<div class="t" style="left:1280.80px;top:680.39px;font-size:11.5px;color:#c7ccd4;font-weight:bold;letter-spacing:0.159px;">Ok</div>
<div class="t" style="left:1334.60px;top:680.39px;font-size:11.5px;color:#c7ccd4;font-weight:bold;letter-spacing:0.072px;">Warning</div>
<div class="t" style="left:1418.40px;top:680.39px;font-size:11.5px;color:#c7ccd4;font-weight:bold;letter-spacing:0.209px;">Unknown</div>
<div class="t" style="left:1509.00px;top:680.39px;font-size:11.5px;color:#c7ccd4;font-weight:bold;letter-spacing:0.173px;">Critical</div>
<div class="t" style="left:1652.70px;top:457.29px;font-size:12.5px;color:#eef0f3;font-weight:bold;letter-spacing:0.089px;">Administrative Tasks</div>
<div class="t" style="left:1661.60px;top:502.59px;font-size:12.5px;color:#eef0f3;font-weight:bold;letter-spacing:-0.157px;">Initial Setup Tasks:</div>
<div class="b" style="left:1652px;top:528px;width:302px;height:1px;background:#213044"></div>
<div class="b" style="left:1661.6px;top:542.9px;width:282.8px;height:31.7px;background:#4a82ea;border-radius:3px"></div>
<div class="t" style="left:1736.50px;top:551.53px;font-size:13px;color:#0b1322;letter-spacing:0.201px;">Configure system settings</div>
<svg style="left:0;top:0" width="2048" height="998"><path d="M1721.74 554.24 L1722.26 552.22 L1724.74 552.22 L1725.26 554.24 L1725.34 554.27 L1727.13 553.21 L1728.89 554.97 L1727.83 556.76 L1727.86 556.84 L1729.88 557.36 L1729.88 559.84 L1727.86 560.36 L1727.83 560.44 L1728.89 562.23 L1727.13 563.99 L1725.34 562.93 L1725.26 562.96 L1724.74 564.98 L1722.26 564.98 L1721.74 562.96 L1721.66 562.93 L1719.87 563.99 L1718.11 562.23 L1719.17 560.44 L1719.14 560.36 L1717.12 559.84 L1717.12 557.36 L1719.14 556.84 L1719.17 556.76 L1718.11 554.97 L1719.87 553.21 L1721.66 554.27Z" fill="none" stroke="#0b1322" stroke-width="1.5" stroke-linejoin="round"/><circle cx="1723.5" cy="558.6" r="2.1" fill="#0b1322"/></svg>
<div class="t" style="left:1661.60px;top:586.54px;font-size:12px;color:#8398b8;letter-spacing:0.101px;">Configure basic settings for your system.</div>
<div class="b" style="left:1661.6px;top:606.9px;width:282.8px;height:31.7px;background:#4a82ea;border-radius:3px"></div>
<svg style="left:1725px;top:617px" width="14.5" height="12" viewBox="0 0 14.5 12" fill="none" stroke="#0b1322" stroke-width="1.5"><rect x="0.9" y="0.9" width="12.7" height="10.2" rx="1.2"/><path d="M1.2 1.5 L7.25 6.4 L13.3 1.5"/></svg>
<div class="t" style="left:1745.40px;top:615.53px;font-size:13px;color:#0b1322;letter-spacing:0.185px;">Configure mail settings</div>
<div class="t" style="left:1661.60px;top:650.24px;font-size:12px;color:#8398b8;letter-spacing:0.111px;">Configure email settings for your system</div>
<div class="b" style="left:1652px;top:675px;width:302px;height:1px;background:#213044"></div>
<div class="t" style="left:1661.60px;top:687.29px;font-size:12.5px;color:#eef0f3;font-weight:bold;letter-spacing:-0.502px;">Ongoing Tasks:</div>
<div class="b" style="left:1652px;top:712px;width:302px;height:1px;background:#213044"></div>
<div class="t" style="left:1661.60px;top:723.84px;font-size:12px;color:#8398b8;letter-spacing:0.122px;">Add or modify items to be monitored</div>
<svg style="left:0;top:0" width="2048" height="998"><rect x="778.00" y="842.5" width="1.2" height="130" fill="#5d6a7e"/><rect x="850.75" y="842.5" width="1.2" height="130" fill="#5d6a7e"/><rect x="923.50" y="842.5" width="1.2" height="130" fill="#5d6a7e"/><rect x="996.25" y="842.5" width="1.2" height="130" fill="#5d6a7e"/><rect x="1069.00" y="842.5" width="1.2" height="130" fill="#5d6a7e"/><rect x="1141.75" y="842.5" width="1.2" height="130" fill="#5d6a7e"/><rect x="1214.50" y="842.5" width="1.2" height="130" fill="#5d6a7e"/><rect x="1287.25" y="842.5" width="1.2" height="130" fill="#5d6a7e"/><rect x="1360.00" y="842.5" width="1.2" height="130" fill="#5d6a7e"/><rect x="1432.75" y="842.5" width="1.2" height="130" fill="#5d6a7e"/><rect x="1505.50" y="842.5" width="1.2" height="130" fill="#5d6a7e"/><rect x="1578.25" y="842.5" width="1.2" height="130" fill="#5d6a7e"/><rect x="779.20" y="849.20" width="734.61" height="11.8" fill="#1878a8" stroke="#cfd3d8" stroke-width="1.2"/><text x="1519.61" y="858.80" font-size="11" font-weight="bold" fill="#34445a" stroke="#cdd2d9" stroke-width="1.7" paint-order="stroke" textLength="52.7" lengthAdjust="spacing">1 011 416</text><rect x="779.20" y="875.10" width="654.94" height="11.8" fill="#1878a8" stroke="#cfd3d8" stroke-width="1.2"/><text x="1439.94" y="884.70" font-size="11" font-weight="bold" fill="#34445a" stroke="#cdd2d9" stroke-width="1.7" paint-order="stroke" textLength="43.5" lengthAdjust="spacing">901 914</text><rect x="779.20" y="899.50" width="313.96" height="11.8" fill="#1878a8" stroke="#cfd3d8" stroke-width="1.2"/><text x="1098.96" y="909.10" font-size="11" font-weight="bold" fill="#34445a" stroke="#cdd2d9" stroke-width="1.7" paint-order="stroke" textLength="43.2" lengthAdjust="spacing">433 204</text><rect x="779.20" y="924.10" width="221.59" height="11.8" fill="#1878a8" stroke="#cfd3d8" stroke-width="1.2"/><text x="1006.59" y="933.70" font-size="11" font-weight="bold" fill="#34445a" stroke="#cdd2d9" stroke-width="1.7" paint-order="stroke" textLength="42.7" lengthAdjust="spacing">306 238</text><rect x="779.20" y="949.70" width="43.00" height="11.8" fill="#1878a8" stroke="#cfd3d8" stroke-width="1.2"/><text x="828.00" y="959.30" font-size="11" font-weight="bold" fill="#34445a" stroke="#cdd2d9" stroke-width="1.7" paint-order="stroke" textLength="37" lengthAdjust="spacing">60 760</text><rect x="1557.7" y="802.5" width="22.2" height="19.7" rx="2" fill="#131a23"/><rect x="1561.2" y="806.0999999999999" width="15.6" height="2.4" rx="1.2" fill="#e6e6e6"/><rect x="1561.2" y="811.3" width="15.6" height="2.4" rx="1.2" fill="#e6e6e6"/><rect x="1561.2" y="816.5" width="15.6" height="2.4" rx="1.2" fill="#e6e6e6"/></svg>
<div class="t" style="left:943.50px;top:802.68px;font-size:13.5px;color:#7b8ba4;letter-spacing:0.305px;">SANS Internet Storm Center Top 10 Rising Ports for 2024-03-21</div>
<div class="t" style="left:1078.60px;top:819.95px;font-size:10px;color:#7b8ba4;letter-spacing:-0.060px;">Source: Internet Storm Center</div>
<div class="t" style="left:752.21px;top:849.19px;font-size:11.5px;color:#a8b4c6;">80</div>
<div class="t" style="left:745.81px;top:875.09px;font-size:11.5px;color:#a8b4c6;">137</div>
<div class="t" style="left:752.21px;top:899.59px;font-size:11.5px;color:#a8b4c6;">22</div>
<div class="t" style="left:739.42px;top:924.19px;font-size:11.5px;color:#a8b4c6;">2222</div>
<div class="t" style="left:752.21px;top:949.79px;font-size:11.5px;color:#a8b4c6;">23</div>
<div class="t" style="left:0.00px;top:-10.41px;font-size:11.5px;color:#9aa4b2;letter-spacing:1.212px;transform-origin:0 0;transform:translate(712.7px,978.5px) rotate(-90deg);">rts</div>
<svg style="left:0;top:0" width="2048" height="998"><circle cx="1798" cy="924" r="63.3" fill="none" stroke="#4a2523" stroke-width="14.0"/><path d="M1798 860.7 A63.3 63.3 0 0 1 1856.14 898.97" fill="none" stroke="#f6735a" stroke-width="14.0"/></svg>
<div class="t" style="left:1761.70px;top:895.89px;font-size:22px;color:#e8523f;font-weight:bold;letter-spacing:1.136px;">18.53</div>
<div class="t" style="left:1822.60px;top:909.70px;font-size:9.5px;color:#d8dce2;letter-spacing:-0.668px;">GiB</div>
<div class="t" style="left:1787.75px;top:925.14px;font-size:12px;color:#dfe3ea;letter-spacing:-0.545px;">total</div>
<div class="t" style="left:1775.75px;top:940.84px;font-size:13px;color:#dfe3ea;letter-spacing:-0.318px;">18.53%</div>
<div class="b" style="left:0px;top:969px;width:2048px;height:29px;background:#1b2533;border-top:1px solid #213044;box-sizing:border-box"></div>
<div class="t" style="left:25.60px;top:977.95px;font-size:10px;color:#dfe3ea;letter-spacing:-0.500px;">Nagios XI 2024R1.1</div>
<div class="b" style="left:116.5px;top:981.5px;width:3.5px;height:3.5px;background:#dfe3ea;border-radius:50%"></div>
<div class="t" style="left:125.70px;top:977.95px;font-size:10px;color:#dfe3ea;letter-spacing:-0.470px;">Check for Updates</div>
<svg style="left:0;top:0" width="2048" height="998"><path d="M1731.10 977.30 L1731.43 977.38 L1731.73 977.61 L1732.00 977.92 L1732.24 978.24 L1732.46 978.51 L1732.71 978.65 L1732.99 978.68 L1733.33 978.60 L1733.71 978.48 L1734.11 978.38 L1734.49 978.38 L1734.80 978.50 L1735.02 978.76 L1735.13 979.12 L1735.17 979.53 L1735.17 979.94 L1735.20 980.28 L1735.31 980.54 L1735.52 980.73 L1735.84 980.86 L1736.22 980.99 L1736.60 981.15 L1736.91 981.37 L1737.09 981.65 L1737.11 981.99 L1736.99 982.35 L1736.78 982.70 L1736.55 983.03 L1736.37 983.32 L1736.30 983.60 L1736.37 983.88 L1736.55 984.17 L1736.78 984.50 L1736.99 984.85 L1737.11 985.21 L1737.09 985.55 L1736.91 985.83 L1736.60 986.05 L1736.22 986.21 L1735.84 986.34 L1735.52 986.47 L1735.31 986.66 L1735.20 986.92 L1735.17 987.26 L1735.17 987.67 L1735.13 988.08 L1735.02 988.44 L1734.80 988.70 L1734.49 988.82 L1734.11 988.82 L1733.71 988.72 L1733.33 988.60 L1732.99 988.52 L1732.71 988.55 L1732.46 988.69 L1732.24 988.96 L1732.00 989.28 L1731.73 989.59 L1731.43 989.82 L1731.10 989.90 L1730.77 989.82 L1730.47 989.59 L1730.20 989.28 L1729.96 988.96 L1729.74 988.69 L1729.49 988.55 L1729.21 988.52 L1728.87 988.60 L1728.49 988.72 L1728.09 988.82 L1727.71 988.82 L1727.40 988.70 L1727.18 988.44 L1727.07 988.08 L1727.03 987.67 L1727.03 987.26 L1727.00 986.92 L1726.89 986.66 L1726.68 986.47 L1726.36 986.34 L1725.98 986.21 L1725.60 986.05 L1725.29 985.83 L1725.11 985.55 L1725.09 985.21 L1725.21 984.85 L1725.42 984.50 L1725.65 984.17 L1725.83 983.88 L1725.90 983.60 L1725.83 983.32 L1725.65 983.03 L1725.42 982.70 L1725.21 982.35 L1725.09 981.99 L1725.11 981.65 L1725.29 981.37 L1725.60 981.15 L1725.98 980.99 L1726.36 980.86 L1726.68 980.73 L1726.89 980.54 L1727.00 980.28 L1727.03 979.94 L1727.03 979.53 L1727.07 979.12 L1727.18 978.76 L1727.40 978.50 L1727.71 978.38 L1728.09 978.38 L1728.49 978.48 L1728.87 978.60 L1729.21 978.68 L1729.49 978.65 L1729.74 978.51 L1729.96 978.24 L1730.20 977.92 L1730.47 977.61 L1730.77 977.38 L1731.10 977.30Z" fill="none" stroke="#e3dc3a" stroke-width="1.3"/><path d="M1731.1 980.6 L1731.1 984.6" stroke="#e3dc3a" stroke-width="1.3"/><circle cx="1731.1" cy="986.4" r="0.75" fill="#e3dc3a"/></svg>
<div class="t" style="left:1746.00px;top:977.95px;font-size:10px;color:#dfe3ea;letter-spacing:-0.633px;">About</div>
<div class="b" style="left:1777.5px;top:979px;width:1px;height:7.6px;background:#aab2bd"></div>
<div class="t" style="left:1786.50px;top:977.95px;font-size:10px;color:#dfe3ea;letter-spacing:-0.516px;">Legal</div>
<div class="b" style="left:1816.5px;top:979px;width:1px;height:7.6px;background:#aab2bd"></div>
<div class="t" style="left:1825.80px;top:977.95px;font-size:10px;color:#dfe3ea;letter-spacing:-0.425px;">Copyright © 2008-2024 Nagios Enterprises, LLC</div>

</div></body></html>
